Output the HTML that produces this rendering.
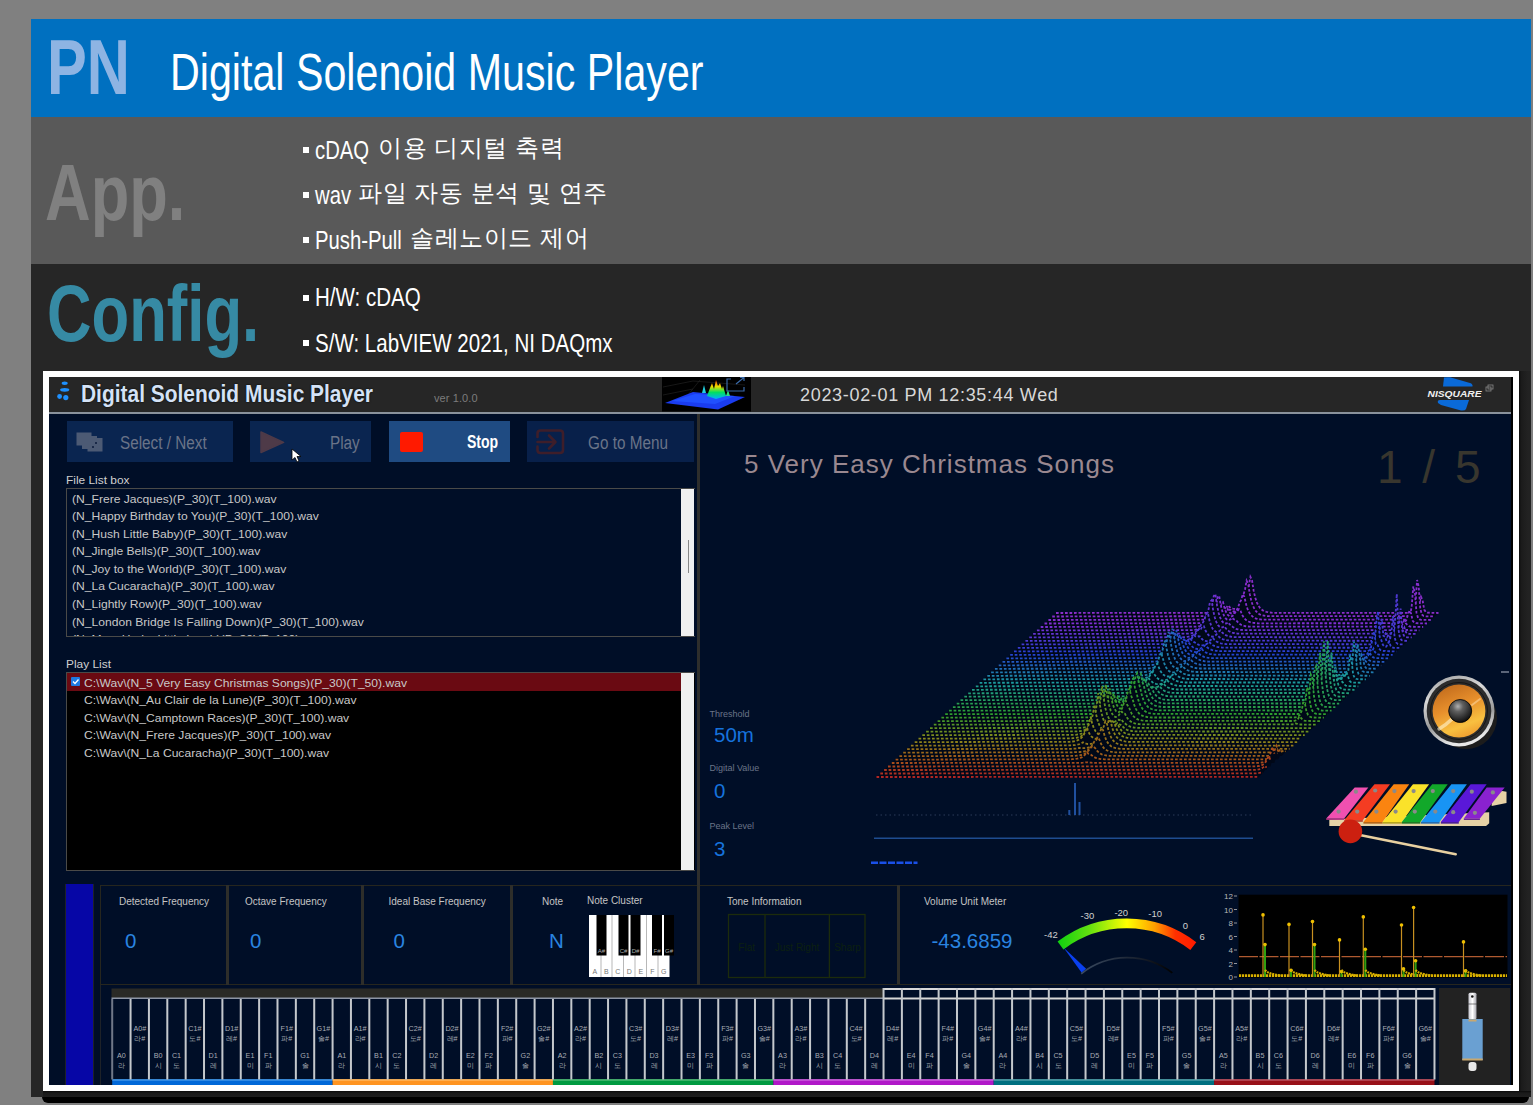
<!DOCTYPE html>
<html><head><meta charset="utf-8">
<style>
*{margin:0;padding:0;box-sizing:border-box}
html,body{width:1533px;height:1105px;overflow:hidden;background:#808080;font-family:"Liberation Sans",sans-serif;position:relative}
.a{position:absolute}
.n{display:inline-block;transform-origin:0 0;white-space:nowrap}
#hdr{left:31px;top:19px;width:1500px;height:98px;background:#0070c0}
#app{left:31px;top:117px;width:1500px;height:147px;background:#595959}
#cfg{left:31px;top:264px;width:1500px;height:833px;background:#262626}
#shadow{left:42px;top:1097px;width:1487px;height:6px;background:#000;border-radius:0 0 8px 8px}
#frame{left:43px;top:371px;width:1476px;height:720px;background:#fff}
#inner{left:49px;top:377px;width:1464px;height:708px;background:#000e27;overflow:hidden}
.big{font-weight:bold;font-size:75px;line-height:1}
.bul{color:#fff;font-size:26px;line-height:1}
.ko{font-size:24px;font-weight:300;letter-spacing:0.55px}
.lbl{color:#d0d0d0;font-size:10px;line-height:1;white-space:nowrap;transform:scaleX(1.19);transform-origin:0 0}
.li{color:#c8c8c8;font-size:11px;line-height:1;white-space:nowrap}
.lis{transform:scaleX(1.1)}
.lbl2{color:#c4c4c4;font-size:10px;line-height:1;white-space:nowrap}
.val{color:#2a84e0;font-size:20.5px;line-height:1;white-space:nowrap}
.lbl3{color:#6a7488;font-size:9px;line-height:1;white-space:nowrap}
.val2{color:#1672dc;font-size:20.5px;line-height:1;white-space:nowrap}
.sq{width:6px;height:6px;background:#fff}
</style></head><body>
<div id="hdr" class="a"></div>
<div id="app" class="a"></div>
<div id="cfg" class="a"></div>
<div id="shadow" class="a"></div>
<!-- header text -->
<div class="a big" style="left:47px;top:29px;font-size:77px;color:#8eb4e3"><span class="n" style="transform:scaleX(0.775)">PN</span></div>
<div class="a" style="left:170px;top:47px;color:#fff;font-size:51.5px;line-height:1"><span class="n" style="transform:scaleX(0.8)">Digital Solenoid Music Player</span></div>
<div class="a big" style="left:45px;top:153px;font-size:79px;color:#808080"><span class="n" style="transform:scaleX(0.8)">App.</span></div>
<div class="a big" style="left:47px;top:274px;font-size:79px;color:#368aa4"><span class="n" style="transform:scaleX(0.78)">Config.</span></div>
<!-- bullets -->
<div class="a sq" style="left:303px;top:147px"></div>
<div class="a bul" style="left:315px;top:136.6px"><span class="n" style="transform:scaleX(0.78)">cDAQ</span></div>
<div class="a bul ko" style="left:378px;top:136px"><span class="n">이용 디지털 축력</span></div>
<div class="a sq" style="left:303px;top:192px"></div>
<div class="a bul" style="left:315px;top:182px"><span class="n" style="transform:scaleX(0.78)">wav</span></div>
<div class="a bul ko" style="left:358px;top:181px"><span class="n">파일 자동 분석 및 연주</span></div>
<div class="a sq" style="left:303px;top:237px"></div>
<div class="a bul" style="left:315px;top:226.6px"><span class="n" style="transform:scaleX(0.78)">Push-Pull</span></div>
<div class="a bul ko" style="left:410px;top:226px"><span class="n">솔레노이드 제어</span></div>
<div class="a sq" style="left:303px;top:295px"></div>
<div class="a bul" style="left:315px;top:284.4px"><span class="n" style="transform:scaleX(0.79)">H/W: cDAQ</span></div>
<div class="a sq" style="left:303px;top:340px"></div>
<div class="a bul" style="left:315px;top:329.6px"><span class="n" style="transform:scaleX(0.79)">S/W: LabVIEW 2021, NI DAQmx</span></div>

<div class="a" style="left:1519px;top:371px;width:12px;height:726px;background:linear-gradient(90deg,#0a0a0a 0,#1a1a1a 2px,#1e1e1e 5px,#222 9px)"></div>
<div class="a" style="left:43px;top:1091px;width:1488px;height:6px;background:linear-gradient(180deg,#0a0a0a 0,#1a1a1a 2px,#1e1e1e 6px)"></div>
<div id="frame" class="a"></div>
<div id="inner" class="a">
</div>

<!-- app title bar -->
<div class="a" style="left:49px;top:377px;width:1462px;height:35px;background:#262626"></div>
<div class="a" style="left:1511px;top:377px;width:2px;height:708px;background:#000"></div>
<div class="a" style="left:49px;top:412px;width:1462px;height:2px;background:#8a929c"></div>
<svg class="a" style="left:55px;top:380px" width="18" height="24" viewBox="0 0 18 24">
<ellipse cx="9.7" cy="3.2" rx="3" ry="1.7" fill="#1e90ff"/>
<ellipse cx="9.7" cy="9.8" rx="4.6" ry="1.9" fill="#1e90ff"/>
<circle cx="4.6" cy="16.5" r="2.4" fill="#1e90ff"/><circle cx="10.8" cy="17.6" r="2.6" fill="#1e90ff"/>
</svg>
<div class="a" style="left:81px;top:383px;color:#d4e2f6;font-size:23px;line-height:1;font-weight:bold;text-shadow:0 0 2px #000"><span class="n" style="transform:scaleX(0.91)">Digital Solenoid Music Player</span></div>
<div class="a" style="left:434px;top:392.5px;color:#7c7c7c;font-size:11px;line-height:1;letter-spacing:0.1px"><span class="n">ver 1.0.0</span></div>
<div class="a" style="left:800px;top:385.5px;color:#d8d8d8;font-size:18px;line-height:1;letter-spacing:0.68px"><span class="n">2023-02-01 PM 12:35:44 Wed</span></div>
<!-- buttons -->
<div class="a" style="left:67px;top:421px;width:166px;height:41px;background:#0a2550"></div>
<div class="a" style="left:250px;top:421px;width:121px;height:41px;background:#0a2550"></div>
<div class="a" style="left:389px;top:421px;width:121px;height:41px;background:#1f4b82"></div>
<div class="a" style="left:527px;top:421px;width:167px;height:41px;background:#08204a"></div>
<div class="a" style="left:400px;top:432px;width:23px;height:20px;background:#ff1a00;border-radius:2px"></div>
<div class="a" style="left:467px;top:433px;color:#fff;font-size:18px;line-height:1;font-weight:bold"><span class="n" style="transform:scaleX(0.78)">Stop</span></div>
<div class="a" style="left:120px;top:433.5px;color:#6a7488;font-size:18px;line-height:1"><span class="n" style="transform:scaleX(0.85)">Select / Next</span></div>
<div class="a" style="left:330px;top:433.5px;color:#6a7488;font-size:18px;line-height:1"><span class="n" style="transform:scaleX(0.85)">Play</span></div>
<div class="a" style="left:588px;top:433.5px;color:#6a7488;font-size:18px;line-height:1"><span class="n" style="transform:scaleX(0.85)">Go to Menu</span></div>
<svg class="a" style="left:260px;top:430px" width="26" height="24"><polygon points="1,2 23.6,12.4 1,22.5" fill="#4e3a48" stroke="#4e3a48" stroke-width="1.5" stroke-linejoin="round"/></svg>
<svg class="a" style="left:530px;top:424px" width="40" height="36"><path d="M7.5 13 V9.5 Q7.5 6.5 10.5 6.5 H30 Q33 6.5 33 9.5 V26 Q33 29 30 29 H10.5 Q7.5 29 7.5 26 V22.5" fill="none" stroke="#3e1e2a" stroke-width="2.6" stroke-linecap="round"/><path d="M7.5 18 H24.5 M19 11.5 L25.5 18 L19 24.5" fill="none" stroke="#3e1e2a" stroke-width="2.6" stroke-linecap="round" stroke-linejoin="round"/></svg>
<svg class="a" style="left:70px;top:424px" width="40" height="36"><rect x="6.5" y="8.5" width="15" height="13" fill="#4c5a74"/><rect x="12" y="12" width="15" height="13" fill="#4c5a74"/><rect x="17.5" y="14" width="15" height="13.5" fill="#4c5a74"/><circle cx="26" cy="19" r="1" fill="#0a1a3a"/><circle cx="23" cy="23" r="1" fill="#0a1a3a"/></svg>
<svg class="a" style="left:291.3px;top:447.9px" width="12" height="16"><path d="M1 1 L1 12 L4 9.5 L6 14 L8 13 L6 8.5 L10 8.5 Z" fill="#fff" stroke="#000" stroke-width="0.8"/></svg>


<!-- file list -->
<div class="a lbl" style="left:66px;top:476px">File List box</div>
<div class="a" style="left:66px;top:488px;width:629px;height:149px;border:1px solid #4a4a48;border-right:none;overflow:hidden">
<div class="a li" style="left:5px;top:4.6px"><span class="n lis">(N_Frere Jacques)(P_30)(T_100).wav</span></div>
<div class="a li" style="left:5px;top:22.1px"><span class="n lis">(N_Happy Birthday to You)(P_30)(T_100).wav</span></div>
<div class="a li" style="left:5px;top:39.7px"><span class="n lis">(N_Hush Little Baby)(P_30)(T_100).wav</span></div>
<div class="a li" style="left:5px;top:57.3px"><span class="n lis">(N_Jingle Bells)(P_30)(T_100).wav</span></div>
<div class="a li" style="left:5px;top:74.8px"><span class="n lis">(N_Joy to the World)(P_30)(T_100).wav</span></div>
<div class="a li" style="left:5px;top:92.3px"><span class="n lis">(N_La Cucaracha)(P_30)(T_100).wav</span></div>
<div class="a li" style="left:5px;top:109.9px"><span class="n lis">(N_Lightly Row)(P_30)(T_100).wav</span></div>
<div class="a li" style="left:5px;top:127.5px"><span class="n lis">(N_London Bridge Is Falling Down)(P_30)(T_100).wav</span></div>
<div class="a li" style="left:5px;top:145.0px"><span class="n lis">(N_Mary Had a Little Lamb)(P_30)(T_100).wav</span></div>
</div>
<div class="a" style="left:681px;top:489px;width:13px;height:147px;background:#f0f0f0"></div>
<div class="a" style="left:688px;top:540px;width:1px;height:33px;background:#888"></div>
<!-- play list -->
<div class="a lbl" style="left:66px;top:660px">Play List</div>
<div class="a" style="left:66px;top:672px;width:629px;height:199px;border:1px solid #4a4a48;border-right:none;background:#000;overflow:hidden">
<div class="a" style="left:0;top:0;width:614px;height:18px;background:#6a0a12"></div>
<div class="a" style="left:4px;top:4px;width:9px;height:9px;background:#1e7ae0;border-radius:1px"></div>
<svg class="a" style="left:4px;top:4px" width="9" height="9"><path d="M2 4.5 L4 6.5 L7.5 2.5" stroke="#fff" stroke-width="1.3" fill="none"/></svg>
<div class="a li" style="left:17px;top:4.6px"><span class="n lis">C:\Wav\(N_5 Very Easy Christmas Songs)(P_30)(T_50).wav</span></div>
<div class="a li" style="left:17px;top:22.1px"><span class="n lis">C:\Wav\(N_Au Clair de la Lune)(P_30)(T_100).wav</span></div>
<div class="a li" style="left:17px;top:39.7px"><span class="n lis">C:\Wav\(N_Camptown Races)(P_30)(T_100).wav</span></div>
<div class="a li" style="left:17px;top:57.3px"><span class="n lis">C:\Wav\(N_Frere Jacques)(P_30)(T_100).wav</span></div>
<div class="a li" style="left:17px;top:74.8px"><span class="n lis">C:\Wav\(N_La Cucaracha)(P_30)(T_100).wav</span></div>
</div>
<div class="a" style="left:681px;top:673px;width:13px;height:197px;background:#f0f0f0"></div>
<div class="a" style="left:697px;top:414px;width:3px;height:471px;background:#2e2e2c"></div>

<!-- bottom-left info panels -->
<div class="a" style="left:65px;top:884px;width:1px;height:201px;background:#1e2228"></div>
<div class="a" style="left:66px;top:884px;width:27px;height:201px;background:#0606a6"></div>
<div class="a" style="left:93px;top:884px;width:1px;height:201px;background:#1e2228"></div>
<div class="a" style="left:100px;top:885px;width:597px;height:100px;border:1px solid #26261e;border-right:none"></div>
<div class="a" style="left:100px;top:985px;width:1px;height:100px;background:#1e2228"></div>
<div class="a" style="left:226px;top:885px;width:3px;height:100px;background:#2e2e2a"></div>
<div class="a" style="left:360.5px;top:885px;width:3px;height:100px;background:#2e2e2a"></div>
<div class="a" style="left:510px;top:885px;width:3px;height:100px;background:#2e2e2a"></div>
<div class="a" style="left:697px;top:885px;width:3px;height:100px;background:#2e2e2a"></div>
<div class="a lbl2" style="left:119px;top:897px">Detected Frequency</div>
<div class="a lbl2" style="left:245px;top:897px">Octave Frequency</div>
<div class="a lbl2" style="left:388.5px;top:897px">Ideal Base Frequency</div>
<div class="a lbl2" style="left:542px;top:897px">Note</div>
<div class="a lbl2" style="left:587px;top:896px">Note Cluster</div>
<div class="a val" style="left:125px;top:930.5px">0</div>
<div class="a val" style="left:250px;top:930.5px">0</div>
<div class="a val" style="left:393.5px;top:930.5px">0</div>
<div class="a val" style="left:549px;top:930.5px">N</div>
<!-- mini piano -->
<svg class="a" style="left:588.5px;top:915px" width="88" height="63" viewBox="0 0 88 63">
<rect x="0" y="0" width="80.5" height="62" fill="#fff"/>
<rect x="11.5" y="0" width="1" height="62" fill="#b8b8b8"/>
<rect x="22.5" y="0" width="1" height="62" fill="#b8b8b8"/>
<rect x="34.0" y="0" width="1" height="62" fill="#b8b8b8"/>
<rect x="45.5" y="0" width="1" height="62" fill="#b8b8b8"/>
<rect x="57.0" y="0" width="1" height="62" fill="#b8b8b8"/>
<rect x="68.5" y="0" width="1" height="62" fill="#b8b8b8"/>
<rect x="7.5" y="0" width="10" height="40.5" fill="#000"/>
<rect x="29.5" y="0" width="10" height="40.5" fill="#000"/>
<rect x="41.5" y="0" width="10" height="40.5" fill="#000"/>
<rect x="63.0" y="0" width="10" height="40.5" fill="#000"/>
<rect x="75.0" y="0" width="10" height="40.5" fill="#000"/>
<text x="5.8" y="58.5" font-size="7" fill="#777" text-anchor="middle" font-family="Liberation Sans">A</text>
<text x="17.3" y="58.5" font-size="7" fill="#777" text-anchor="middle" font-family="Liberation Sans">B</text>
<text x="28.8" y="58.5" font-size="7" fill="#777" text-anchor="middle" font-family="Liberation Sans">C</text>
<text x="40.3" y="58.5" font-size="7" fill="#777" text-anchor="middle" font-family="Liberation Sans">D</text>
<text x="51.8" y="58.5" font-size="7" fill="#777" text-anchor="middle" font-family="Liberation Sans">E</text>
<text x="63.3" y="58.5" font-size="7" fill="#777" text-anchor="middle" font-family="Liberation Sans">F</text>
<text x="74.8" y="58.5" font-size="7" fill="#777" text-anchor="middle" font-family="Liberation Sans">G</text>
<text x="12.5" y="38" font-size="6" fill="#aaa" text-anchor="middle" font-family="Liberation Sans">A#</text>
<text x="34.5" y="38" font-size="6" fill="#aaa" text-anchor="middle" font-family="Liberation Sans">C#</text>
<text x="46.5" y="38" font-size="6" fill="#aaa" text-anchor="middle" font-family="Liberation Sans">D#</text>
<text x="68.0" y="38" font-size="6" fill="#aaa" text-anchor="middle" font-family="Liberation Sans">F#</text>
<text x="80.0" y="38" font-size="6" fill="#aaa" text-anchor="middle" font-family="Liberation Sans">G#</text>
</svg>

<!-- keyboard -->
<svg class="a" style="left:100px;top:985px" width="1413" height="100" viewBox="100 985 1413 100">
<rect x="111.5" y="988.5" width="772.5" height="9.5" fill="#2a2a26"/>
<rect x="111.5" y="997.5" width="772.5" height="1.5" fill="#8c94a4"/>
<rect x="883" y="988" width="552" height="2" fill="#d8d8d8"/>
<rect x="883" y="997.5" width="552" height="2" fill="#d8d8d8"/>
<rect x="112.20" y="1079.3" width="220.38" height="5.7" fill="#0068d8"/><rect x="112.20" y="1079.3" width="220.38" height="1.3" fill="#50a0e8"/>
<rect x="332.58" y="1079.3" width="220.38" height="5.7" fill="#ff9420"/><rect x="332.58" y="1079.3" width="220.38" height="1.3" fill="#ffc070"/>
<rect x="552.96" y="1079.3" width="220.38" height="5.7" fill="#009a40"/><rect x="552.96" y="1079.3" width="220.38" height="1.3" fill="#60c080"/>
<rect x="773.34" y="1079.3" width="220.38" height="5.7" fill="#b018c8"/><rect x="773.34" y="1079.3" width="220.38" height="1.3" fill="#d070e0"/>
<rect x="993.72" y="1079.3" width="220.38" height="5.7" fill="#007080"/><rect x="993.72" y="1079.3" width="220.38" height="1.3" fill="#60a8b0"/>
<rect x="1214.10" y="1079.3" width="220.38" height="5.7" fill="#981018"/><rect x="1214.10" y="1079.3" width="220.38" height="1.3" fill="#c06070"/>
<rect x="111.20" y="999" width="2" height="80.5" fill="#707888"/>
<rect x="129.56" y="999" width="2" height="80.5" fill="#c4c8cc"/>
<rect x="147.93" y="999" width="2" height="80.5" fill="#c4c8cc"/>
<rect x="166.30" y="999" width="2" height="80.5" fill="#c4c8cc"/>
<rect x="184.66" y="999" width="2" height="80.5" fill="#c4c8cc"/>
<rect x="203.02" y="999" width="2" height="80.5" fill="#c4c8cc"/>
<rect x="221.39" y="999" width="2" height="80.5" fill="#c4c8cc"/>
<rect x="239.75" y="999" width="2" height="80.5" fill="#c4c8cc"/>
<rect x="258.12" y="999" width="2" height="80.5" fill="#c4c8cc"/>
<rect x="276.49" y="999" width="2" height="80.5" fill="#c4c8cc"/>
<rect x="294.85" y="999" width="2" height="80.5" fill="#c4c8cc"/>
<rect x="313.21" y="999" width="2" height="80.5" fill="#c4c8cc"/>
<rect x="331.58" y="999" width="2" height="80.5" fill="#c4c8cc"/>
<rect x="349.94" y="999" width="2" height="80.5" fill="#c4c8cc"/>
<rect x="368.31" y="999" width="2" height="80.5" fill="#c4c8cc"/>
<rect x="386.67" y="999" width="2" height="80.5" fill="#c4c8cc"/>
<rect x="405.04" y="999" width="2" height="80.5" fill="#c4c8cc"/>
<rect x="423.40" y="999" width="2" height="80.5" fill="#c4c8cc"/>
<rect x="441.77" y="999" width="2" height="80.5" fill="#c4c8cc"/>
<rect x="460.13" y="999" width="2" height="80.5" fill="#c4c8cc"/>
<rect x="478.50" y="999" width="2" height="80.5" fill="#c4c8cc"/>
<rect x="496.86" y="999" width="2" height="80.5" fill="#c4c8cc"/>
<rect x="515.23" y="999" width="2" height="80.5" fill="#c4c8cc"/>
<rect x="533.60" y="999" width="2" height="80.5" fill="#c4c8cc"/>
<rect x="551.96" y="999" width="2" height="80.5" fill="#c4c8cc"/>
<rect x="570.32" y="999" width="2" height="80.5" fill="#c4c8cc"/>
<rect x="588.69" y="999" width="2" height="80.5" fill="#c4c8cc"/>
<rect x="607.05" y="999" width="2" height="80.5" fill="#c4c8cc"/>
<rect x="625.42" y="999" width="2" height="80.5" fill="#c4c8cc"/>
<rect x="643.78" y="999" width="2" height="80.5" fill="#c4c8cc"/>
<rect x="662.15" y="999" width="2" height="80.5" fill="#c4c8cc"/>
<rect x="680.51" y="999" width="2" height="80.5" fill="#c4c8cc"/>
<rect x="698.88" y="999" width="2" height="80.5" fill="#c4c8cc"/>
<rect x="717.25" y="999" width="2" height="80.5" fill="#c4c8cc"/>
<rect x="735.61" y="999" width="2" height="80.5" fill="#c4c8cc"/>
<rect x="753.98" y="999" width="2" height="80.5" fill="#c4c8cc"/>
<rect x="772.34" y="999" width="2" height="80.5" fill="#c4c8cc"/>
<rect x="790.71" y="999" width="2" height="80.5" fill="#c4c8cc"/>
<rect x="809.07" y="999" width="2" height="80.5" fill="#c4c8cc"/>
<rect x="827.43" y="999" width="2" height="80.5" fill="#c4c8cc"/>
<rect x="845.80" y="999" width="2" height="80.5" fill="#c4c8cc"/>
<rect x="864.16" y="999" width="2" height="80.5" fill="#c4c8cc"/>
<rect x="882.53" y="988" width="2" height="91.5" fill="#c4c8cc"/>
<rect x="900.89" y="988" width="2" height="91.5" fill="#c4c8cc"/>
<rect x="919.26" y="988" width="2" height="91.5" fill="#c4c8cc"/>
<rect x="937.62" y="988" width="2" height="91.5" fill="#c4c8cc"/>
<rect x="955.99" y="988" width="2" height="91.5" fill="#c4c8cc"/>
<rect x="974.36" y="988" width="2" height="91.5" fill="#c4c8cc"/>
<rect x="992.72" y="988" width="2" height="91.5" fill="#c4c8cc"/>
<rect x="1011.08" y="988" width="2" height="91.5" fill="#c4c8cc"/>
<rect x="1029.45" y="988" width="2" height="91.5" fill="#c4c8cc"/>
<rect x="1047.81" y="988" width="2" height="91.5" fill="#c4c8cc"/>
<rect x="1066.18" y="988" width="2" height="91.5" fill="#c4c8cc"/>
<rect x="1084.54" y="988" width="2" height="91.5" fill="#c4c8cc"/>
<rect x="1102.91" y="988" width="2" height="91.5" fill="#c4c8cc"/>
<rect x="1121.27" y="988" width="2" height="91.5" fill="#c4c8cc"/>
<rect x="1139.64" y="988" width="2" height="91.5" fill="#c4c8cc"/>
<rect x="1158.00" y="988" width="2" height="91.5" fill="#c4c8cc"/>
<rect x="1176.37" y="988" width="2" height="91.5" fill="#c4c8cc"/>
<rect x="1194.73" y="988" width="2" height="91.5" fill="#c4c8cc"/>
<rect x="1213.10" y="988" width="2" height="91.5" fill="#c4c8cc"/>
<rect x="1231.46" y="988" width="2" height="91.5" fill="#c4c8cc"/>
<rect x="1249.83" y="988" width="2" height="91.5" fill="#c4c8cc"/>
<rect x="1268.19" y="988" width="2" height="91.5" fill="#c4c8cc"/>
<rect x="1286.56" y="988" width="2" height="91.5" fill="#c4c8cc"/>
<rect x="1304.92" y="988" width="2" height="91.5" fill="#c4c8cc"/>
<rect x="1323.29" y="988" width="2" height="91.5" fill="#c4c8cc"/>
<rect x="1341.65" y="988" width="2" height="91.5" fill="#c4c8cc"/>
<rect x="1360.02" y="988" width="2" height="91.5" fill="#c4c8cc"/>
<rect x="1378.38" y="988" width="2" height="91.5" fill="#c4c8cc"/>
<rect x="1396.75" y="988" width="2" height="91.5" fill="#c4c8cc"/>
<rect x="1415.12" y="988" width="2" height="91.5" fill="#c4c8cc"/>
<rect x="1433.48" y="988" width="2" height="91.5" fill="#c4c8cc"/>
<g font-family="Liberation Sans" font-size="7.2" fill="#a8acb4" text-anchor="middle">
<text x="121.4" y="1058">A0</text><text x="121.4" y="1067.5">라</text>
<text x="139.8" y="1030.5">A0#</text><text x="139.8" y="1040.5">라#</text>
<text x="158.1" y="1058">B0</text><text x="158.1" y="1067.5">시</text>
<text x="176.5" y="1058">C1</text><text x="176.5" y="1067.5">도</text>
<text x="194.9" y="1030.5">C1#</text><text x="194.9" y="1040.5">도#</text>
<text x="213.2" y="1058">D1</text><text x="213.2" y="1067.5">레</text>
<text x="231.6" y="1030.5">D1#</text><text x="231.6" y="1040.5">레#</text>
<text x="250.0" y="1058">E1</text><text x="250.0" y="1067.5">미</text>
<text x="268.3" y="1058">F1</text><text x="268.3" y="1067.5">파</text>
<text x="286.7" y="1030.5">F1#</text><text x="286.7" y="1040.5">파#</text>
<text x="305.0" y="1058">G1</text><text x="305.0" y="1067.5">솔</text>
<text x="323.4" y="1030.5">G1#</text><text x="323.4" y="1040.5">솔#</text>
<text x="341.8" y="1058">A1</text><text x="341.8" y="1067.5">라</text>
<text x="360.1" y="1030.5">A1#</text><text x="360.1" y="1040.5">라#</text>
<text x="378.5" y="1058">B1</text><text x="378.5" y="1067.5">시</text>
<text x="396.9" y="1058">C2</text><text x="396.9" y="1067.5">도</text>
<text x="415.2" y="1030.5">C2#</text><text x="415.2" y="1040.5">도#</text>
<text x="433.6" y="1058">D2</text><text x="433.6" y="1067.5">레</text>
<text x="452.0" y="1030.5">D2#</text><text x="452.0" y="1040.5">레#</text>
<text x="470.3" y="1058">E2</text><text x="470.3" y="1067.5">미</text>
<text x="488.7" y="1058">F2</text><text x="488.7" y="1067.5">파</text>
<text x="507.1" y="1030.5">F2#</text><text x="507.1" y="1040.5">파#</text>
<text x="525.4" y="1058">G2</text><text x="525.4" y="1067.5">솔</text>
<text x="543.8" y="1030.5">G2#</text><text x="543.8" y="1040.5">솔#</text>
<text x="562.2" y="1058">A2</text><text x="562.2" y="1067.5">라</text>
<text x="580.5" y="1030.5">A2#</text><text x="580.5" y="1040.5">라#</text>
<text x="598.9" y="1058">B2</text><text x="598.9" y="1067.5">시</text>
<text x="617.3" y="1058">C3</text><text x="617.3" y="1067.5">도</text>
<text x="635.6" y="1030.5">C3#</text><text x="635.6" y="1040.5">도#</text>
<text x="654.0" y="1058">D3</text><text x="654.0" y="1067.5">레</text>
<text x="672.4" y="1030.5">D3#</text><text x="672.4" y="1040.5">레#</text>
<text x="690.7" y="1058">E3</text><text x="690.7" y="1067.5">미</text>
<text x="709.1" y="1058">F3</text><text x="709.1" y="1067.5">파</text>
<text x="727.4" y="1030.5">F3#</text><text x="727.4" y="1040.5">파#</text>
<text x="745.8" y="1058">G3</text><text x="745.8" y="1067.5">솔</text>
<text x="764.2" y="1030.5">G3#</text><text x="764.2" y="1040.5">솔#</text>
<text x="782.5" y="1058">A3</text><text x="782.5" y="1067.5">라</text>
<text x="800.9" y="1030.5">A3#</text><text x="800.9" y="1040.5">라#</text>
<text x="819.3" y="1058">B3</text><text x="819.3" y="1067.5">시</text>
<text x="837.6" y="1058">C4</text><text x="837.6" y="1067.5">도</text>
<text x="856.0" y="1030.5">C4#</text><text x="856.0" y="1040.5">도#</text>
<text x="874.4" y="1058">D4</text><text x="874.4" y="1067.5">레</text>
<text x="892.7" y="1030.5">D4#</text><text x="892.7" y="1040.5">레#</text>
<text x="911.1" y="1058">E4</text><text x="911.1" y="1067.5">미</text>
<text x="929.5" y="1058">F4</text><text x="929.5" y="1067.5">파</text>
<text x="947.8" y="1030.5">F4#</text><text x="947.8" y="1040.5">파#</text>
<text x="966.2" y="1058">G4</text><text x="966.2" y="1067.5">솔</text>
<text x="984.6" y="1030.5">G4#</text><text x="984.6" y="1040.5">솔#</text>
<text x="1002.9" y="1058">A4</text><text x="1002.9" y="1067.5">라</text>
<text x="1021.3" y="1030.5">A4#</text><text x="1021.3" y="1040.5">라#</text>
<text x="1039.6" y="1058">B4</text><text x="1039.6" y="1067.5">시</text>
<text x="1058.0" y="1058">C5</text><text x="1058.0" y="1067.5">도</text>
<text x="1076.4" y="1030.5">C5#</text><text x="1076.4" y="1040.5">도#</text>
<text x="1094.7" y="1058">D5</text><text x="1094.7" y="1067.5">레</text>
<text x="1113.1" y="1030.5">D5#</text><text x="1113.1" y="1040.5">레#</text>
<text x="1131.5" y="1058">E5</text><text x="1131.5" y="1067.5">미</text>
<text x="1149.8" y="1058">F5</text><text x="1149.8" y="1067.5">파</text>
<text x="1168.2" y="1030.5">F5#</text><text x="1168.2" y="1040.5">파#</text>
<text x="1186.6" y="1058">G5</text><text x="1186.6" y="1067.5">솔</text>
<text x="1204.9" y="1030.5">G5#</text><text x="1204.9" y="1040.5">솔#</text>
<text x="1223.3" y="1058">A5</text><text x="1223.3" y="1067.5">라</text>
<text x="1241.7" y="1030.5">A5#</text><text x="1241.7" y="1040.5">라#</text>
<text x="1260.0" y="1058">B5</text><text x="1260.0" y="1067.5">시</text>
<text x="1278.4" y="1058">C6</text><text x="1278.4" y="1067.5">도</text>
<text x="1296.8" y="1030.5">C6#</text><text x="1296.8" y="1040.5">도#</text>
<text x="1315.1" y="1058">D6</text><text x="1315.1" y="1067.5">레</text>
<text x="1333.5" y="1030.5">D6#</text><text x="1333.5" y="1040.5">레#</text>
<text x="1351.9" y="1058">E6</text><text x="1351.9" y="1067.5">미</text>
<text x="1370.2" y="1058">F6</text><text x="1370.2" y="1067.5">파</text>
<text x="1388.6" y="1030.5">F6#</text><text x="1388.6" y="1040.5">파#</text>
<text x="1407.0" y="1058">G6</text><text x="1407.0" y="1067.5">솔</text>
<text x="1425.3" y="1030.5">G6#</text><text x="1425.3" y="1040.5">솔#</text>
</g>
</svg>

<!-- right panel -->
<div class="a" style="left:744px;top:451px;color:#9a8890;font-size:26px;line-height:1;white-space:nowrap;letter-spacing:1px">5 Very Easy Christmas Songs</div>
<div class="a" style="left:1377px;top:444px;color:#38362e;font-size:46px;line-height:1;white-space:nowrap;letter-spacing:3.5px">1 / 5</div>
<div class="a lbl3" style="left:709.5px;top:710.2px">Threshold</div>
<div class="a val2" style="left:714px;top:724.8px">50m</div>
<div class="a lbl3" style="left:709.5px;top:764.2px">Digital Value</div>
<div class="a val2" style="left:714px;top:781px">0</div>
<div class="a lbl3" style="left:709.5px;top:822.2px">Peak Level</div>
<div class="a val2" style="left:714px;top:839.3px">3</div>
<!--PLOT--><svg class="a" style="left:860px;top:540px" width="600" height="340" viewBox="860 540 600 340">
<polygon fill="#000818" points="1056.0,613.0 1212.2,612.8 1213.8,612.7 1215.4,612.5 1217.0,612.3 1218.6,612.1 1220.2,611.7 1221.8,611.1 1223.3,610.3 1224.9,609.2 1226.5,607.6 1228.1,605.4 1229.7,607.2 1231.3,608.2 1232.9,608.6 1234.5,608.9 1236.1,609.3 1237.7,609.2 1239.3,608.6 1240.9,607.4 1242.5,605.4 1244.1,602.4 1245.7,597.9 1247.2,591.4 1248.8,586.0 1250.4,576.9 1252.0,580.2 1253.6,590.5 1255.2,597.6 1256.8,602.4 1258.4,605.7 1260.0,608.0 1261.6,609.6 1263.2,610.6 1264.8,611.4 1266.4,611.9 1268.0,612.2 1269.6,612.5 1271.2,612.6 1272.8,612.8 1413.0,612.8 1414.6,612.5 1416.2,611.7 1417.8,609.5 1419.4,603.6 1421.0,596.8 1422.6,600.4 1424.2,609.6 1425.8,612.1 1427.3,612.7 1438.5,613.0 1434.7,616.5 1052.2,616.5"/>
<polyline fill="none" stroke="#8a2eca" stroke-width="1.8" stroke-dasharray="2.7 1.8" points="1056.0,613.0 1212.2,612.8 1213.8,612.7 1215.4,612.5 1217.0,612.3 1218.6,612.1 1220.2,611.7 1221.8,611.1 1223.3,610.3 1224.9,609.2 1226.5,607.6 1228.1,605.4 1229.7,607.2 1231.3,608.2 1232.9,608.6 1234.5,608.9 1236.1,609.3 1237.7,609.2 1239.3,608.6 1240.9,607.4 1242.5,605.4 1244.1,602.4 1245.7,597.9 1247.2,591.4 1248.8,586.0 1250.4,576.9 1252.0,580.2 1253.6,590.5 1255.2,597.6 1256.8,602.4 1258.4,605.7 1260.0,608.0 1261.6,609.6 1263.2,610.6 1264.8,611.4 1266.4,611.9 1268.0,612.2 1269.6,612.5 1271.2,612.6 1272.8,612.8 1413.0,612.8 1414.6,612.5 1416.2,611.7 1417.8,609.5 1419.4,603.6 1421.0,596.8 1422.6,600.4 1424.2,609.6 1425.8,612.1 1427.3,612.7 1438.5,613.0"/>
<polygon fill="#000818" points="1052.2,616.5 1208.4,616.2 1210.0,616.1 1211.6,616.0 1213.1,615.8 1214.7,615.5 1216.3,615.0 1217.9,614.4 1219.5,613.6 1221.1,612.3 1222.7,610.6 1224.3,608.1 1225.9,609.5 1227.5,610.0 1229.1,609.7 1230.7,609.8 1232.3,611.0 1233.9,611.5 1235.5,611.3 1237.1,610.3 1238.6,608.6 1240.2,605.7 1241.8,601.3 1243.4,594.9 1245.0,589.7 1246.6,580.7 1248.2,584.0 1249.8,594.2 1251.4,601.2 1253.0,606.0 1254.6,609.3 1256.2,611.5 1257.8,613.1 1259.4,614.2 1261.0,614.9 1262.6,615.4 1264.1,615.7 1265.7,616.0 1267.3,616.1 1268.9,616.2 1409.2,616.2 1410.8,615.9 1412.4,614.8 1414.0,611.8 1415.6,602.0 1417.1,580.0 1418.7,586.6 1420.3,608.8 1421.9,614.5 1423.5,616.0 1425.1,616.3 1434.7,616.5 1430.9,620.0 1048.4,620.0"/>
<polyline fill="none" stroke="#872ecd" stroke-width="1.8" stroke-dasharray="2.7 1.8" points="1052.2,616.5 1208.4,616.2 1210.0,616.1 1211.6,616.0 1213.1,615.8 1214.7,615.5 1216.3,615.0 1217.9,614.4 1219.5,613.6 1221.1,612.3 1222.7,610.6 1224.3,608.1 1225.9,609.5 1227.5,610.0 1229.1,609.7 1230.7,609.8 1232.3,611.0 1233.9,611.5 1235.5,611.3 1237.1,610.3 1238.6,608.6 1240.2,605.7 1241.8,601.3 1243.4,594.9 1245.0,589.7 1246.6,580.7 1248.2,584.0 1249.8,594.2 1251.4,601.2 1253.0,606.0 1254.6,609.3 1256.2,611.5 1257.8,613.1 1259.4,614.2 1261.0,614.9 1262.6,615.4 1264.1,615.7 1265.7,616.0 1267.3,616.1 1268.9,616.2 1409.2,616.2 1410.8,615.9 1412.4,614.8 1414.0,611.8 1415.6,602.0 1417.1,580.0 1418.7,586.6 1420.3,608.8 1421.9,614.5 1423.5,616.0 1425.1,616.3 1434.7,616.5"/>
<polygon fill="#000818" points="1048.4,620.0 1204.5,619.7 1206.1,619.6 1207.7,619.4 1209.3,619.1 1210.9,618.8 1212.5,618.3 1214.1,617.6 1215.7,616.5 1217.3,615.0 1218.9,612.9 1220.5,609.9 1222.1,610.5 1223.7,609.9 1225.3,607.9 1226.9,607.6 1228.5,610.8 1230.0,612.7 1231.6,613.6 1233.2,613.6 1234.8,612.7 1236.4,610.8 1238.0,607.7 1239.6,602.9 1241.2,599.9 1242.8,594.2 1244.4,596.8 1246.0,604.1 1247.6,609.1 1249.2,612.5 1250.8,614.8 1252.4,616.4 1254.0,617.5 1255.5,618.3 1257.1,618.8 1258.7,619.2 1260.3,619.4 1261.9,619.6 1263.5,619.7 1405.4,619.7 1407.0,619.4 1408.5,618.4 1410.1,615.4 1411.7,606.3 1413.3,586.4 1414.9,592.6 1416.5,612.9 1418.1,618.1 1419.7,619.5 1421.3,619.8 1430.9,620.0 1427.0,623.5 1044.5,623.5"/>
<polyline fill="none" stroke="#842ecf" stroke-width="1.8" stroke-dasharray="2.7 1.8" points="1048.4,620.0 1204.5,619.7 1206.1,619.6 1207.7,619.4 1209.3,619.1 1210.9,618.8 1212.5,618.3 1214.1,617.6 1215.7,616.5 1217.3,615.0 1218.9,612.9 1220.5,609.9 1222.1,610.5 1223.7,609.9 1225.3,607.9 1226.9,607.6 1228.5,610.8 1230.0,612.7 1231.6,613.6 1233.2,613.6 1234.8,612.7 1236.4,610.8 1238.0,607.7 1239.6,602.9 1241.2,599.9 1242.8,594.2 1244.4,596.8 1246.0,604.1 1247.6,609.1 1249.2,612.5 1250.8,614.8 1252.4,616.4 1254.0,617.5 1255.5,618.3 1257.1,618.8 1258.7,619.2 1260.3,619.4 1261.9,619.6 1263.5,619.7 1405.4,619.7 1407.0,619.4 1408.5,618.4 1410.1,615.4 1411.7,606.3 1413.3,586.4 1414.9,592.6 1416.5,612.9 1418.1,618.1 1419.7,619.5 1421.3,619.8 1430.9,620.0"/>
<polygon fill="#000818" points="1044.5,623.5 1199.1,623.2 1200.7,623.1 1202.3,623.0 1203.9,622.8 1205.5,622.4 1207.1,622.0 1208.7,621.4 1210.3,620.4 1211.9,619.1 1213.5,617.2 1215.1,614.5 1216.7,610.7 1218.3,610.0 1219.9,607.6 1221.4,602.9 1223.0,602.1 1224.6,608.3 1226.2,612.4 1227.8,614.9 1229.4,616.2 1231.0,616.6 1232.6,615.9 1234.2,614.3 1235.8,611.4 1237.4,611.1 1239.0,609.2 1240.6,611.0 1242.2,614.9 1243.8,617.6 1245.4,619.4 1246.9,620.7 1248.5,621.5 1250.1,622.1 1251.7,622.6 1253.3,622.8 1254.9,623.0 1256.5,623.2 1258.1,623.3 1401.5,623.2 1403.1,622.9 1404.7,622.2 1406.3,620.2 1407.9,614.9 1409.5,610.5 1411.1,613.6 1412.7,620.8 1414.3,622.7 1415.9,623.2 1427.0,623.5 1423.2,627.0 1040.7,627.0"/>
<polyline fill="none" stroke="#812ed2" stroke-width="1.8" stroke-dasharray="2.7 1.8" points="1044.5,623.5 1199.1,623.2 1200.7,623.1 1202.3,623.0 1203.9,622.8 1205.5,622.4 1207.1,622.0 1208.7,621.4 1210.3,620.4 1211.9,619.1 1213.5,617.2 1215.1,614.5 1216.7,610.7 1218.3,610.0 1219.9,607.6 1221.4,602.9 1223.0,602.1 1224.6,608.3 1226.2,612.4 1227.8,614.9 1229.4,616.2 1231.0,616.6 1232.6,615.9 1234.2,614.3 1235.8,611.4 1237.4,611.1 1239.0,609.2 1240.6,611.0 1242.2,614.9 1243.8,617.6 1245.4,619.4 1246.9,620.7 1248.5,621.5 1250.1,622.1 1251.7,622.6 1253.3,622.8 1254.9,623.0 1256.5,623.2 1258.1,623.3 1401.5,623.2 1403.1,622.9 1404.7,622.2 1406.3,620.2 1407.9,614.9 1409.5,610.5 1411.1,613.6 1412.7,620.8 1414.3,622.7 1415.9,623.2 1427.0,623.5"/>
<polygon fill="#000818" points="1040.7,627.0 1195.3,626.7 1196.9,626.5 1198.5,626.4 1200.1,626.1 1201.7,625.7 1203.3,625.2 1204.9,624.4 1206.5,623.3 1208.1,621.7 1209.7,619.4 1211.3,616.0 1212.8,611.2 1214.4,609.3 1216.0,604.9 1217.6,597.3 1219.2,595.8 1220.8,605.3 1222.4,611.6 1224.0,615.7 1225.6,618.3 1227.2,619.6 1228.8,620.0 1230.4,619.4 1232.0,617.8 1233.6,619.2 1235.2,619.7 1236.8,621.0 1238.3,622.8 1239.9,624.1 1241.5,625.0 1243.1,625.6 1244.7,626.0 1246.3,626.3 1247.9,626.5 1249.5,626.6 1251.1,626.7 1397.7,626.7 1399.3,626.5 1400.9,625.8 1402.5,624.3 1404.1,620.6 1405.7,623.1 1407.3,624.8 1408.9,626.2 1410.5,626.7 1423.2,627.0 1419.4,630.5 1036.9,630.5"/>
<polyline fill="none" stroke="#792fd3" stroke-width="1.8" stroke-dasharray="2.7 1.8" points="1040.7,627.0 1195.3,626.7 1196.9,626.5 1198.5,626.4 1200.1,626.1 1201.7,625.7 1203.3,625.2 1204.9,624.4 1206.5,623.3 1208.1,621.7 1209.7,619.4 1211.3,616.0 1212.8,611.2 1214.4,609.3 1216.0,604.9 1217.6,597.3 1219.2,595.8 1220.8,605.3 1222.4,611.6 1224.0,615.7 1225.6,618.3 1227.2,619.6 1228.8,620.0 1230.4,619.4 1232.0,617.8 1233.6,619.2 1235.2,619.7 1236.8,621.0 1238.3,622.8 1239.9,624.1 1241.5,625.0 1243.1,625.6 1244.7,626.0 1246.3,626.3 1247.9,626.5 1249.5,626.6 1251.1,626.7 1397.7,626.7 1399.3,626.5 1400.9,625.8 1402.5,624.3 1404.1,620.6 1405.7,623.1 1407.3,624.8 1408.9,626.2 1410.5,626.7 1423.2,627.0"/>
<polygon fill="#000818" points="1036.9,630.4 1189.9,630.2 1191.5,630.1 1193.1,630.0 1194.7,629.8 1196.3,629.5 1197.9,629.1 1199.5,628.5 1201.1,627.7 1202.7,626.4 1204.2,624.7 1205.8,622.1 1207.4,618.5 1209.0,613.2 1210.6,610.5 1212.2,605.0 1213.8,595.9 1215.4,594.1 1217.0,605.2 1218.6,612.7 1220.2,617.7 1221.8,620.9 1223.4,622.7 1225.0,623.5 1226.6,623.4 1228.2,622.3 1229.7,624.4 1231.3,625.8 1232.9,627.0 1234.5,628.0 1236.1,628.8 1237.7,629.3 1239.3,629.6 1240.9,629.9 1242.5,630.0 1244.1,630.2 1393.9,630.2 1395.5,630.0 1397.1,629.3 1398.7,627.8 1400.3,624.4 1401.9,627.8 1403.5,629.3 1405.1,629.9 1406.7,630.0 1408.2,629.8 1409.8,630.3 1419.4,630.4 1415.6,633.9 1033.1,633.9"/>
<polyline fill="none" stroke="#6e32d3" stroke-width="1.8" stroke-dasharray="2.7 1.8" points="1036.9,630.4 1189.9,630.2 1191.5,630.1 1193.1,630.0 1194.7,629.8 1196.3,629.5 1197.9,629.1 1199.5,628.5 1201.1,627.7 1202.7,626.4 1204.2,624.7 1205.8,622.1 1207.4,618.5 1209.0,613.2 1210.6,610.5 1212.2,605.0 1213.8,595.9 1215.4,594.1 1217.0,605.2 1218.6,612.7 1220.2,617.7 1221.8,620.9 1223.4,622.7 1225.0,623.5 1226.6,623.4 1228.2,622.3 1229.7,624.4 1231.3,625.8 1232.9,627.0 1234.5,628.0 1236.1,628.8 1237.7,629.3 1239.3,629.6 1240.9,629.9 1242.5,630.0 1244.1,630.2 1393.9,630.2 1395.5,630.0 1397.1,629.3 1398.7,627.8 1400.3,624.4 1401.9,627.8 1403.5,629.3 1405.1,629.9 1406.7,630.0 1408.2,629.8 1409.8,630.3 1419.4,630.4"/>
<polygon fill="#000818" points="1033.1,633.9 1186.1,633.7 1187.7,633.6 1189.3,633.5 1190.9,633.3 1192.5,633.0 1194.1,632.6 1195.6,632.1 1197.2,631.3 1198.8,630.1 1200.4,628.4 1202.0,626.0 1203.6,622.5 1205.2,617.5 1206.8,615.1 1208.4,610.2 1210.0,602.0 1211.6,600.3 1213.2,610.6 1214.8,617.5 1216.4,622.1 1218.0,625.1 1219.6,626.7 1221.1,627.4 1222.7,627.3 1224.3,626.2 1225.9,628.5 1227.5,630.0 1229.1,631.2 1230.7,632.0 1232.3,632.6 1233.9,633.0 1235.5,633.3 1237.1,633.5 1238.7,633.6 1240.3,633.7 1390.1,633.7 1391.7,633.4 1393.3,632.8 1394.9,631.3 1396.5,627.9 1398.1,631.3 1399.6,632.6 1401.2,632.7 1402.8,630.9 1404.4,627.4 1406.0,632.3 1407.6,633.5 1409.2,633.8 1415.6,633.9 1411.8,637.4 1029.3,637.4"/>
<polyline fill="none" stroke="#6334d3" stroke-width="1.8" stroke-dasharray="2.7 1.8" points="1033.1,633.9 1186.1,633.7 1187.7,633.6 1189.3,633.5 1190.9,633.3 1192.5,633.0 1194.1,632.6 1195.6,632.1 1197.2,631.3 1198.8,630.1 1200.4,628.4 1202.0,626.0 1203.6,622.5 1205.2,617.5 1206.8,615.1 1208.4,610.2 1210.0,602.0 1211.6,600.3 1213.2,610.6 1214.8,617.5 1216.4,622.1 1218.0,625.1 1219.6,626.7 1221.1,627.4 1222.7,627.3 1224.3,626.2 1225.9,628.5 1227.5,630.0 1229.1,631.2 1230.7,632.0 1232.3,632.6 1233.9,633.0 1235.5,633.3 1237.1,633.5 1238.7,633.6 1240.3,633.7 1390.1,633.7 1391.7,633.4 1393.3,632.8 1394.9,631.3 1396.5,627.9 1398.1,631.3 1399.6,632.6 1401.2,632.7 1402.8,630.9 1404.4,627.4 1406.0,632.3 1407.6,633.5 1409.2,633.8 1415.6,633.9"/>
<polygon fill="#000818" points="1029.3,637.4 1183.9,637.2 1185.5,637.1 1187.0,636.9 1188.6,636.7 1190.2,636.3 1191.8,635.8 1193.4,635.2 1195.0,634.2 1196.6,632.8 1198.2,630.7 1199.8,627.8 1201.4,623.6 1203.0,622.5 1204.6,619.4 1206.2,613.8 1207.8,612.7 1209.4,620.2 1211.0,625.2 1212.5,628.5 1214.1,630.5 1215.7,631.6 1217.3,631.9 1218.9,631.4 1220.5,630.2 1222.1,632.4 1223.7,633.8 1225.3,634.9 1226.9,635.7 1228.5,636.2 1230.1,636.5 1231.7,636.8 1233.3,637.0 1234.9,637.1 1236.5,637.2 1384.7,637.3 1386.3,637.1 1387.9,636.5 1389.5,635.7 1391.0,634.7 1392.6,631.3 1394.2,634.6 1395.8,635.5 1397.4,633.8 1399.0,624.7 1400.6,608.6 1402.2,630.2 1403.8,635.6 1405.4,637.0 1407.0,637.3 1411.8,637.4 1407.9,640.9 1025.4,640.9"/>
<polyline fill="none" stroke="#5836d3" stroke-width="1.8" stroke-dasharray="2.7 1.8" points="1029.3,637.4 1183.9,637.2 1185.5,637.1 1187.0,636.9 1188.6,636.7 1190.2,636.3 1191.8,635.8 1193.4,635.2 1195.0,634.2 1196.6,632.8 1198.2,630.7 1199.8,627.8 1201.4,623.6 1203.0,622.5 1204.6,619.4 1206.2,613.8 1207.8,612.7 1209.4,620.2 1211.0,625.2 1212.5,628.5 1214.1,630.5 1215.7,631.6 1217.3,631.9 1218.9,631.4 1220.5,630.2 1222.1,632.4 1223.7,633.8 1225.3,634.9 1226.9,635.7 1228.5,636.2 1230.1,636.5 1231.7,636.8 1233.3,637.0 1234.9,637.1 1236.5,637.2 1384.7,637.3 1386.3,637.1 1387.9,636.5 1389.5,635.7 1391.0,634.7 1392.6,631.3 1394.2,634.6 1395.8,635.5 1397.4,633.8 1399.0,624.7 1400.6,608.6 1402.2,630.2 1403.8,635.6 1405.4,637.0 1407.0,637.3 1411.8,637.4"/>
<polygon fill="#000818" points="1025.4,640.9 1180.0,640.7 1181.6,640.6 1183.2,640.5 1184.8,640.3 1186.4,640.0 1188.0,639.6 1189.6,639.1 1191.2,638.3 1192.8,637.2 1194.4,635.6 1196.0,633.3 1197.6,630.0 1199.2,630.2 1200.8,629.1 1202.4,626.4 1203.9,626.2 1205.5,630.5 1207.1,633.4 1208.7,635.2 1210.3,636.2 1211.9,636.6 1213.5,636.4 1215.1,635.6 1216.7,634.2 1218.3,636.2 1219.9,637.6 1221.5,638.6 1223.1,639.3 1224.7,639.7 1226.3,640.1 1227.9,640.3 1229.4,640.5 1231.0,640.6 1379.3,640.8 1380.9,640.5 1382.4,639.5 1384.0,635.8 1385.6,633.6 1387.2,636.8 1388.8,634.5 1390.4,637.9 1392.0,638.5 1393.6,635.3 1395.2,620.3 1396.8,593.9 1398.4,629.2 1400.0,638.0 1401.6,640.2 1403.2,640.7 1407.9,640.9 1404.1,644.4 1021.6,644.4"/>
<polyline fill="none" stroke="#4d39d3" stroke-width="1.8" stroke-dasharray="2.7 1.8" points="1025.4,640.9 1180.0,640.7 1181.6,640.6 1183.2,640.5 1184.8,640.3 1186.4,640.0 1188.0,639.6 1189.6,639.1 1191.2,638.3 1192.8,637.2 1194.4,635.6 1196.0,633.3 1197.6,630.0 1199.2,630.2 1200.8,629.1 1202.4,626.4 1203.9,626.2 1205.5,630.5 1207.1,633.4 1208.7,635.2 1210.3,636.2 1211.9,636.6 1213.5,636.4 1215.1,635.6 1216.7,634.2 1218.3,636.2 1219.9,637.6 1221.5,638.6 1223.1,639.3 1224.7,639.7 1226.3,640.1 1227.9,640.3 1229.4,640.5 1231.0,640.6 1379.3,640.8 1380.9,640.5 1382.4,639.5 1384.0,635.8 1385.6,633.6 1387.2,636.8 1388.8,634.5 1390.4,637.9 1392.0,638.5 1393.6,635.3 1395.2,620.3 1396.8,593.9 1398.4,629.2 1400.0,638.0 1401.6,640.2 1403.2,640.7 1407.9,640.9"/>
<polygon fill="#000818" points="1021.6,644.4 1177.8,644.1 1179.4,644.0 1181.0,643.9 1182.6,643.6 1184.2,643.3 1185.8,642.8 1187.4,642.2 1189.0,641.2 1190.6,639.9 1192.2,638.0 1193.8,635.3 1195.3,636.3 1196.9,636.8 1198.5,636.3 1200.1,636.6 1201.7,638.8 1203.3,640.1 1204.9,640.9 1206.5,641.2 1208.1,641.1 1209.7,640.6 1211.3,639.6 1212.9,638.0 1214.5,639.9 1216.1,641.2 1217.7,642.2 1219.3,642.8 1220.8,643.3 1222.4,643.6 1224.0,643.8 1225.6,644.0 1227.2,644.1 1373.8,644.3 1375.4,644.1 1377.0,643.2 1378.6,639.6 1380.2,625.5 1381.8,619.0 1383.4,635.7 1385.0,636.8 1386.6,641.2 1388.2,642.4 1389.8,640.8 1391.4,632.0 1393.0,616.2 1394.6,637.4 1396.2,642.6 1397.8,644.0 1399.3,644.3 1404.1,644.4 1400.3,647.9 1017.8,647.9"/>
<polyline fill="none" stroke="#423bd3" stroke-width="1.8" stroke-dasharray="2.7 1.8" points="1021.6,644.4 1177.8,644.1 1179.4,644.0 1181.0,643.9 1182.6,643.6 1184.2,643.3 1185.8,642.8 1187.4,642.2 1189.0,641.2 1190.6,639.9 1192.2,638.0 1193.8,635.3 1195.3,636.3 1196.9,636.8 1198.5,636.3 1200.1,636.6 1201.7,638.8 1203.3,640.1 1204.9,640.9 1206.5,641.2 1208.1,641.1 1209.7,640.6 1211.3,639.6 1212.9,638.0 1214.5,639.9 1216.1,641.2 1217.7,642.2 1219.3,642.8 1220.8,643.3 1222.4,643.6 1224.0,643.8 1225.6,644.0 1227.2,644.1 1373.8,644.3 1375.4,644.1 1377.0,643.2 1378.6,639.6 1380.2,625.5 1381.8,619.0 1383.4,635.7 1385.0,636.8 1386.6,641.2 1388.2,642.4 1389.8,640.8 1391.4,632.0 1393.0,616.2 1394.6,637.4 1396.2,642.6 1397.8,644.0 1399.3,644.3 1404.1,644.4"/>
<polygon fill="#000818" points="1017.8,647.9 1174.0,647.6 1175.6,647.5 1177.2,647.4 1178.8,647.1 1180.4,646.8 1182.0,646.4 1183.6,645.7 1185.2,644.8 1186.7,643.5 1188.3,641.6 1189.9,638.9 1191.5,640.1 1193.1,641.5 1194.7,642.4 1196.3,643.2 1197.9,644.4 1199.5,645.1 1201.1,645.4 1202.7,645.4 1204.3,645.1 1205.9,644.4 1207.5,643.3 1209.1,641.7 1210.7,643.5 1212.2,644.8 1213.8,645.7 1215.4,646.3 1217.0,646.8 1218.6,647.1 1220.2,647.3 1221.8,647.5 1223.4,647.6 1370.0,647.8 1371.6,647.4 1373.2,646.1 1374.8,641.0 1376.4,620.7 1378.0,611.5 1379.6,636.5 1381.2,639.7 1382.8,644.7 1384.4,646.5 1386.0,646.7 1387.6,645.0 1389.2,641.6 1390.7,646.3 1392.3,647.5 1393.9,647.8 1400.3,647.9 1396.5,651.4 1014.0,651.4"/>
<polyline fill="none" stroke="#373ed3" stroke-width="1.8" stroke-dasharray="2.7 1.8" points="1017.8,647.9 1174.0,647.6 1175.6,647.5 1177.2,647.4 1178.8,647.1 1180.4,646.8 1182.0,646.4 1183.6,645.7 1185.2,644.8 1186.7,643.5 1188.3,641.6 1189.9,638.9 1191.5,640.1 1193.1,641.5 1194.7,642.4 1196.3,643.2 1197.9,644.4 1199.5,645.1 1201.1,645.4 1202.7,645.4 1204.3,645.1 1205.9,644.4 1207.5,643.3 1209.1,641.7 1210.7,643.5 1212.2,644.8 1213.8,645.7 1215.4,646.3 1217.0,646.8 1218.6,647.1 1220.2,647.3 1221.8,647.5 1223.4,647.6 1370.0,647.8 1371.6,647.4 1373.2,646.1 1374.8,641.0 1376.4,620.7 1378.0,611.5 1379.6,636.5 1381.2,639.7 1382.8,644.7 1384.4,646.5 1386.0,646.7 1387.6,645.0 1389.2,641.6 1390.7,646.3 1392.3,647.5 1393.9,647.8 1400.3,647.9"/>
<polygon fill="#000818" points="1014.0,651.4 1168.6,651.2 1170.2,651.1 1171.8,651.0 1173.4,650.8 1175.0,650.5 1176.6,650.1 1178.1,649.6 1179.7,648.8 1181.3,647.7 1182.9,646.2 1184.5,644.0 1186.1,640.8 1187.7,641.1 1189.3,643.4 1190.9,645.5 1192.5,646.9 1194.1,648.0 1195.7,648.7 1197.3,649.0 1198.9,648.9 1200.5,648.6 1202.1,647.9 1203.6,646.8 1205.2,645.2 1206.8,647.0 1208.4,648.3 1210.0,649.2 1211.6,649.8 1213.2,650.3 1214.8,650.6 1216.4,650.8 1218.0,651.0 1219.6,651.1 1367.8,651.1 1369.4,650.4 1371.0,647.6 1372.6,636.7 1374.2,631.5 1375.8,644.1 1377.4,644.2 1379.0,648.5 1380.6,650.2 1382.1,650.8 1383.7,651.0 1385.3,650.8 1386.9,651.2 1396.5,651.4 1392.7,654.9 1010.2,654.9"/>
<polyline fill="none" stroke="#2c40d3" stroke-width="1.8" stroke-dasharray="2.7 1.8" points="1014.0,651.4 1168.6,651.2 1170.2,651.1 1171.8,651.0 1173.4,650.8 1175.0,650.5 1176.6,650.1 1178.1,649.6 1179.7,648.8 1181.3,647.7 1182.9,646.2 1184.5,644.0 1186.1,640.8 1187.7,641.1 1189.3,643.4 1190.9,645.5 1192.5,646.9 1194.1,648.0 1195.7,648.7 1197.3,649.0 1198.9,648.9 1200.5,648.6 1202.1,647.9 1203.6,646.8 1205.2,645.2 1206.8,647.0 1208.4,648.3 1210.0,649.2 1211.6,649.8 1213.2,650.3 1214.8,650.6 1216.4,650.8 1218.0,651.0 1219.6,651.1 1367.8,651.1 1369.4,650.4 1371.0,647.6 1372.6,636.7 1374.2,631.5 1375.8,644.1 1377.4,644.2 1379.0,648.5 1380.6,650.2 1382.1,650.8 1383.7,651.0 1385.3,650.8 1386.9,651.2 1396.5,651.4"/>
<polygon fill="#000818" points="1010.2,654.9 1164.8,654.6 1166.4,654.5 1168.0,654.3 1169.5,654.1 1171.1,653.7 1172.7,653.3 1174.3,652.5 1175.9,651.5 1177.5,650.1 1179.1,648.0 1180.7,645.0 1182.3,640.6 1183.9,639.4 1185.5,642.8 1187.1,646.4 1188.7,648.8 1190.3,650.4 1191.9,651.4 1193.5,651.9 1195.0,652.1 1196.6,651.8 1198.2,651.2 1199.8,650.2 1201.4,648.6 1203.0,650.4 1204.6,651.7 1206.2,652.7 1207.8,653.3 1209.4,653.8 1211.0,654.1 1212.6,654.3 1214.2,654.5 1215.8,654.6 1365.6,654.6 1367.2,654.0 1368.8,651.6 1370.4,650.1 1372.0,651.4 1373.5,648.6 1375.1,652.2 1376.7,653.7 1378.3,654.4 1379.9,654.7 1392.7,654.9 1388.8,658.4 1006.3,658.4"/>
<polyline fill="none" stroke="#2444d1" stroke-width="1.8" stroke-dasharray="2.7 1.8" points="1010.2,654.9 1164.8,654.6 1166.4,654.5 1168.0,654.3 1169.5,654.1 1171.1,653.7 1172.7,653.3 1174.3,652.5 1175.9,651.5 1177.5,650.1 1179.1,648.0 1180.7,645.0 1182.3,640.6 1183.9,639.4 1185.5,642.8 1187.1,646.4 1188.7,648.8 1190.3,650.4 1191.9,651.4 1193.5,651.9 1195.0,652.1 1196.6,651.8 1198.2,651.2 1199.8,650.2 1201.4,648.6 1203.0,650.4 1204.6,651.7 1206.2,652.7 1207.8,653.3 1209.4,653.8 1211.0,654.1 1212.6,654.3 1214.2,654.5 1215.8,654.6 1365.6,654.6 1367.2,654.0 1368.8,651.6 1370.4,650.1 1372.0,651.4 1373.5,648.6 1375.1,652.2 1376.7,653.7 1378.3,654.4 1379.9,654.7 1392.7,654.9"/>
<polygon fill="#000818" points="1006.4,658.4 1159.4,658.1 1160.9,658.0 1162.5,657.9 1164.1,657.6 1165.7,657.3 1167.3,656.9 1168.9,656.2 1170.5,655.2 1172.1,653.9 1173.7,651.9 1175.3,649.0 1176.9,644.8 1178.5,638.9 1180.1,635.1 1181.7,640.2 1183.3,645.7 1184.9,649.5 1186.4,652.0 1188.0,653.6 1189.6,654.5 1191.2,654.9 1192.8,654.9 1194.4,654.4 1196.0,653.5 1197.6,651.9 1199.2,653.8 1200.8,655.2 1202.4,656.1 1204.0,656.8 1205.6,657.2 1207.2,657.6 1208.8,657.8 1210.4,658.0 1211.9,658.1 1363.4,658.1 1364.9,657.7 1366.5,657.0 1368.1,655.7 1369.7,652.3 1371.3,655.7 1372.9,657.2 1374.5,657.8 1376.1,658.1 1388.9,658.4 1385.0,661.9 1002.5,661.9"/>
<polyline fill="none" stroke="#234fcb" stroke-width="1.8" stroke-dasharray="2.7 1.8" points="1006.4,658.4 1159.4,658.1 1160.9,658.0 1162.5,657.9 1164.1,657.6 1165.7,657.3 1167.3,656.9 1168.9,656.2 1170.5,655.2 1172.1,653.9 1173.7,651.9 1175.3,649.0 1176.9,644.8 1178.5,638.9 1180.1,635.1 1181.7,640.2 1183.3,645.7 1184.9,649.5 1186.4,652.0 1188.0,653.6 1189.6,654.5 1191.2,654.9 1192.8,654.9 1194.4,654.4 1196.0,653.5 1197.6,651.9 1199.2,653.8 1200.8,655.2 1202.4,656.1 1204.0,656.8 1205.6,657.2 1207.2,657.6 1208.8,657.8 1210.4,658.0 1211.9,658.1 1363.4,658.1 1364.9,657.7 1366.5,657.0 1368.1,655.7 1369.7,652.3 1371.3,655.7 1372.9,657.2 1374.5,657.8 1376.1,658.1 1388.9,658.4"/>
<polygon fill="#000818" points="1002.5,661.9 1153.9,661.6 1155.5,661.6 1157.1,661.4 1158.7,661.2 1160.3,660.9 1161.9,660.5 1163.5,660.0 1165.1,659.1 1166.7,657.9 1168.3,656.1 1169.9,653.6 1171.5,649.9 1173.1,644.5 1174.7,636.8 1176.3,630.5 1177.8,637.2 1179.4,644.8 1181.0,649.9 1182.6,653.4 1184.2,655.6 1185.8,657.0 1187.4,657.8 1189.0,657.9 1190.6,657.6 1192.2,656.8 1193.8,655.3 1195.4,657.2 1197.0,658.6 1198.6,659.5 1200.2,660.2 1201.8,660.7 1203.3,661.0 1204.9,661.3 1206.5,661.4 1208.1,661.6 1359.5,661.6 1361.1,661.4 1362.7,660.7 1364.3,659.2 1365.9,655.8 1367.5,659.1 1369.1,660.2 1370.7,661.0 1372.3,661.5 1373.9,661.7 1385.0,661.9 1381.2,665.4 998.7,665.4"/>
<polyline fill="none" stroke="#225ac4" stroke-width="1.8" stroke-dasharray="2.7 1.8" points="1002.5,661.9 1153.9,661.6 1155.5,661.6 1157.1,661.4 1158.7,661.2 1160.3,660.9 1161.9,660.5 1163.5,660.0 1165.1,659.1 1166.7,657.9 1168.3,656.1 1169.9,653.6 1171.5,649.9 1173.1,644.5 1174.7,636.8 1176.3,630.5 1177.8,637.2 1179.4,644.8 1181.0,649.9 1182.6,653.4 1184.2,655.6 1185.8,657.0 1187.4,657.8 1189.0,657.9 1190.6,657.6 1192.2,656.8 1193.8,655.3 1195.4,657.2 1197.0,658.6 1198.6,659.5 1200.2,660.2 1201.8,660.7 1203.3,661.0 1204.9,661.3 1206.5,661.4 1208.1,661.6 1359.5,661.6 1361.1,661.4 1362.7,660.7 1364.3,659.2 1365.9,655.8 1367.5,659.1 1369.1,660.2 1370.7,661.0 1372.3,661.5 1373.9,661.7 1385.0,661.9"/>
<polygon fill="#000818" points="998.7,665.3 1150.1,665.1 1151.7,665.0 1153.3,664.8 1154.9,664.6 1156.5,664.3 1158.1,663.9 1159.7,663.2 1161.3,662.2 1162.9,660.8 1164.5,658.8 1166.1,655.9 1167.7,651.6 1169.2,645.5 1170.8,636.6 1172.4,628.6 1174.0,636.4 1175.6,645.3 1177.2,651.4 1178.8,655.5 1180.4,658.2 1182.0,659.9 1183.6,660.8 1185.2,661.1 1186.8,660.9 1188.4,660.1 1190.0,658.7 1191.6,660.6 1193.2,662.0 1194.7,663.0 1196.3,663.7 1197.9,664.2 1199.5,664.5 1201.1,664.8 1202.7,664.9 1204.3,665.1 1355.7,665.1 1357.3,664.8 1358.9,664.2 1360.5,662.7 1362.1,659.1 1363.7,661.9 1365.3,660.9 1366.9,662.4 1368.5,664.5 1370.1,665.1 1381.2,665.3 1377.4,668.8 994.9,668.8"/>
<polyline fill="none" stroke="#2164be" stroke-width="1.8" stroke-dasharray="2.7 1.8" points="998.7,665.3 1150.1,665.1 1151.7,665.0 1153.3,664.8 1154.9,664.6 1156.5,664.3 1158.1,663.9 1159.7,663.2 1161.3,662.2 1162.9,660.8 1164.5,658.8 1166.1,655.9 1167.7,651.6 1169.2,645.5 1170.8,636.6 1172.4,628.6 1174.0,636.4 1175.6,645.3 1177.2,651.4 1178.8,655.5 1180.4,658.2 1182.0,659.9 1183.6,660.8 1185.2,661.1 1186.8,660.9 1188.4,660.1 1190.0,658.7 1191.6,660.6 1193.2,662.0 1194.7,663.0 1196.3,663.7 1197.9,664.2 1199.5,664.5 1201.1,664.8 1202.7,664.9 1204.3,665.1 1355.7,665.1 1357.3,664.8 1358.9,664.2 1360.5,662.7 1362.1,659.1 1363.7,661.9 1365.3,660.9 1366.9,662.4 1368.5,664.5 1370.1,665.1 1381.2,665.3"/>
<polygon fill="#000818" points="994.9,668.8 1146.3,668.6 1147.9,668.5 1149.5,668.3 1151.1,668.1 1152.7,667.8 1154.3,667.3 1155.9,666.7 1157.5,665.7 1159.0,664.3 1160.6,662.3 1162.2,659.4 1163.8,655.1 1165.4,648.9 1167.0,640.0 1168.6,632.0 1170.2,639.9 1171.8,648.8 1173.4,654.9 1175.0,659.0 1176.6,661.7 1178.2,663.4 1179.8,664.3 1181.4,664.6 1183.0,664.4 1184.5,663.6 1186.1,662.1 1187.7,664.1 1189.3,665.5 1190.9,666.5 1192.5,667.2 1194.1,667.7 1195.7,668.0 1197.3,668.3 1198.9,668.4 1200.5,668.5 1351.9,668.6 1353.5,668.3 1355.1,667.6 1356.7,666.0 1358.3,662.1 1359.9,663.1 1361.5,655.2 1363.0,658.9 1364.6,666.3 1366.2,668.1 1367.8,668.6 1377.4,668.8 1373.6,672.3 991.1,672.3"/>
<polyline fill="none" stroke="#206fb7" stroke-width="1.8" stroke-dasharray="2.7 1.8" points="994.9,668.8 1146.3,668.6 1147.9,668.5 1149.5,668.3 1151.1,668.1 1152.7,667.8 1154.3,667.3 1155.9,666.7 1157.5,665.7 1159.0,664.3 1160.6,662.3 1162.2,659.4 1163.8,655.1 1165.4,648.9 1167.0,640.0 1168.6,632.0 1170.2,639.9 1171.8,648.8 1173.4,654.9 1175.0,659.0 1176.6,661.7 1178.2,663.4 1179.8,664.3 1181.4,664.6 1183.0,664.4 1184.5,663.6 1186.1,662.1 1187.7,664.1 1189.3,665.5 1190.9,666.5 1192.5,667.2 1194.1,667.7 1195.7,668.0 1197.3,668.3 1198.9,668.4 1200.5,668.5 1351.9,668.6 1353.5,668.3 1355.1,667.6 1356.7,666.0 1358.3,662.1 1359.9,663.1 1361.5,655.2 1363.0,658.9 1364.6,666.3 1366.2,668.1 1367.8,668.6 1377.4,668.8"/>
<polygon fill="#000818" points="991.1,672.3 1142.5,672.1 1144.1,672.0 1145.7,671.9 1147.3,671.7 1148.9,671.4 1150.4,671.0 1152.0,670.4 1153.6,669.6 1155.2,668.3 1156.8,666.6 1158.4,664.0 1160.0,660.3 1161.6,654.9 1163.2,647.1 1164.8,640.8 1166.4,647.6 1168.0,655.2 1169.6,660.3 1171.2,663.8 1172.8,666.1 1174.4,667.5 1175.9,668.2 1177.5,668.4 1179.1,668.1 1180.7,667.2 1182.3,665.7 1183.9,667.7 1185.5,669.0 1187.1,670.0 1188.7,670.7 1190.3,671.2 1191.9,671.5 1193.5,671.7 1195.1,671.9 1196.7,672.0 1348.1,672.1 1349.7,671.8 1351.3,671.1 1352.9,669.3 1354.4,664.6 1356.0,663.0 1357.6,644.2 1359.2,651.4 1360.8,667.0 1362.4,671.0 1364.0,672.0 1365.6,672.2 1373.6,672.3 1369.7,675.8 987.2,675.8"/>
<polyline fill="none" stroke="#1f7ab1" stroke-width="1.8" stroke-dasharray="2.7 1.8" points="991.1,672.3 1142.5,672.1 1144.1,672.0 1145.7,671.9 1147.3,671.7 1148.9,671.4 1150.4,671.0 1152.0,670.4 1153.6,669.6 1155.2,668.3 1156.8,666.6 1158.4,664.0 1160.0,660.3 1161.6,654.9 1163.2,647.1 1164.8,640.8 1166.4,647.6 1168.0,655.2 1169.6,660.3 1171.2,663.8 1172.8,666.1 1174.4,667.5 1175.9,668.2 1177.5,668.4 1179.1,668.1 1180.7,667.2 1182.3,665.7 1183.9,667.7 1185.5,669.0 1187.1,670.0 1188.7,670.7 1190.3,671.2 1191.9,671.5 1193.5,671.7 1195.1,671.9 1196.7,672.0 1348.1,672.1 1349.7,671.8 1351.3,671.1 1352.9,669.3 1354.4,664.6 1356.0,663.0 1357.6,644.2 1359.2,651.4 1360.8,667.0 1362.4,671.0 1364.0,672.0 1365.6,672.2 1373.6,672.3"/>
<polygon fill="#000818" points="987.3,675.8 1140.3,675.6 1141.8,675.5 1143.4,675.3 1145.0,675.1 1146.6,674.8 1148.2,674.3 1149.8,673.6 1151.4,672.7 1153.0,671.3 1154.6,669.3 1156.2,666.4 1157.8,662.2 1159.4,656.2 1161.0,652.4 1162.6,657.5 1164.2,663.1 1165.8,666.9 1167.3,669.4 1168.9,671.0 1170.5,671.9 1172.1,672.4 1173.7,672.4 1175.3,671.9 1176.9,670.9 1178.5,669.4 1180.1,671.3 1181.7,672.6 1183.3,673.5 1184.9,674.2 1186.5,674.7 1188.1,675.0 1189.7,675.2 1191.3,675.4 1192.8,675.5 1344.3,675.6 1345.8,675.3 1347.4,674.5 1349.0,672.7 1350.6,667.7 1352.2,664.9 1353.8,641.6 1355.4,650.2 1357.0,669.3 1358.6,674.2 1360.2,675.4 1361.8,675.7 1369.8,675.8 1365.9,679.3 983.4,679.3"/>
<polyline fill="none" stroke="#1e84aa" stroke-width="1.8" stroke-dasharray="2.7 1.8" points="987.3,675.8 1140.3,675.6 1141.8,675.5 1143.4,675.3 1145.0,675.1 1146.6,674.8 1148.2,674.3 1149.8,673.6 1151.4,672.7 1153.0,671.3 1154.6,669.3 1156.2,666.4 1157.8,662.2 1159.4,656.2 1161.0,652.4 1162.6,657.5 1164.2,663.1 1165.8,666.9 1167.3,669.4 1168.9,671.0 1170.5,671.9 1172.1,672.4 1173.7,672.4 1175.3,671.9 1176.9,670.9 1178.5,669.4 1180.1,671.3 1181.7,672.6 1183.3,673.5 1184.9,674.2 1186.5,674.7 1188.1,675.0 1189.7,675.2 1191.3,675.4 1192.8,675.5 1344.3,675.6 1345.8,675.3 1347.4,674.5 1349.0,672.7 1350.6,667.7 1352.2,664.9 1353.8,641.6 1355.4,650.2 1357.0,669.3 1358.6,674.2 1360.2,675.4 1361.8,675.7 1369.8,675.8"/>
<polygon fill="#000818" points="983.4,679.3 1138.0,679.0 1139.6,678.9 1141.2,678.7 1142.8,678.5 1144.4,678.2 1146.0,677.7 1147.6,677.0 1149.2,675.9 1150.8,674.5 1152.4,672.4 1154.0,669.3 1155.6,665.0 1157.2,663.7 1158.7,667.2 1160.3,670.8 1161.9,673.2 1163.5,674.8 1165.1,675.8 1166.7,676.4 1168.3,676.5 1169.9,676.3 1171.5,675.7 1173.1,674.6 1174.7,673.0 1176.3,674.8 1177.9,676.2 1179.5,677.1 1181.1,677.7 1182.7,678.2 1184.2,678.5 1185.8,678.7 1187.4,678.9 1189.0,679.0 1340.4,679.1 1342.0,678.8 1343.6,678.0 1345.2,676.2 1346.8,671.6 1348.4,670.8 1350.0,655.1 1351.6,661.3 1353.2,674.7 1354.8,678.1 1356.4,679.0 1358.0,679.2 1365.9,679.3 1362.1,682.8 979.6,682.8"/>
<polyline fill="none" stroke="#1c8fa4" stroke-width="1.8" stroke-dasharray="2.7 1.8" points="983.4,679.3 1138.0,679.0 1139.6,678.9 1141.2,678.7 1142.8,678.5 1144.4,678.2 1146.0,677.7 1147.6,677.0 1149.2,675.9 1150.8,674.5 1152.4,672.4 1154.0,669.3 1155.6,665.0 1157.2,663.7 1158.7,667.2 1160.3,670.8 1161.9,673.2 1163.5,674.8 1165.1,675.8 1166.7,676.4 1168.3,676.5 1169.9,676.3 1171.5,675.7 1173.1,674.6 1174.7,673.0 1176.3,674.8 1177.9,676.2 1179.5,677.1 1181.1,677.7 1182.7,678.2 1184.2,678.5 1185.8,678.7 1187.4,678.9 1189.0,679.0 1340.4,679.1 1342.0,678.8 1343.6,678.0 1345.2,676.2 1346.8,671.6 1348.4,670.8 1350.0,655.1 1351.6,661.3 1353.2,674.7 1354.8,678.1 1356.4,679.0 1358.0,679.2 1365.9,679.3"/>
<polygon fill="#000818" points="979.6,682.8 1135.8,682.5 1137.4,682.4 1139.0,682.2 1140.6,681.9 1142.2,681.5 1143.8,681.0 1145.4,680.3 1147.0,679.2 1148.6,677.6 1150.1,675.4 1151.7,672.2 1153.3,672.7 1154.9,675.1 1156.5,677.3 1158.1,678.8 1159.7,679.7 1161.3,680.3 1162.9,680.5 1164.5,680.4 1166.1,680.0 1167.7,679.3 1169.3,678.2 1170.9,676.6 1172.5,678.4 1174.1,679.7 1175.6,680.6 1177.2,681.2 1178.8,681.7 1180.4,682.0 1182.0,682.2 1183.6,682.4 1185.2,682.5 1336.6,682.5 1338.2,682.2 1339.8,681.4 1341.4,679.4 1343.0,674.8 1344.6,677.3 1346.2,672.3 1347.8,675.3 1349.4,680.8 1351.0,682.2 1352.6,682.6 1362.1,682.8 1358.3,686.3 975.8,686.3"/>
<polyline fill="none" stroke="#1b9a9d" stroke-width="1.8" stroke-dasharray="2.7 1.8" points="979.6,682.8 1135.8,682.5 1137.4,682.4 1139.0,682.2 1140.6,681.9 1142.2,681.5 1143.8,681.0 1145.4,680.3 1147.0,679.2 1148.6,677.6 1150.1,675.4 1151.7,672.2 1153.3,672.7 1154.9,675.1 1156.5,677.3 1158.1,678.8 1159.7,679.7 1161.3,680.3 1162.9,680.5 1164.5,680.4 1166.1,680.0 1167.7,679.3 1169.3,678.2 1170.9,676.6 1172.5,678.4 1174.1,679.7 1175.6,680.6 1177.2,681.2 1178.8,681.7 1180.4,682.0 1182.0,682.2 1183.6,682.4 1185.2,682.5 1336.6,682.5 1338.2,682.2 1339.8,681.4 1341.4,679.4 1343.0,674.8 1344.6,677.3 1346.2,672.3 1347.8,675.3 1349.4,680.8 1351.0,682.2 1352.6,682.6 1362.1,682.8"/>
<polygon fill="#000818" points="975.8,686.3 1132.0,686.0 1133.6,685.9 1135.2,685.8 1136.8,685.6 1138.4,685.3 1140.0,684.8 1141.5,684.2 1143.1,683.3 1144.7,682.1 1146.3,680.3 1147.9,677.8 1149.5,679.2 1151.1,681.0 1152.7,682.4 1154.3,683.4 1155.9,683.9 1157.5,684.2 1159.1,684.2 1160.7,684.0 1162.3,683.5 1163.9,682.7 1165.5,681.6 1167.0,680.0 1168.6,681.8 1170.2,683.1 1171.8,684.1 1173.4,684.7 1175.0,685.2 1176.6,685.5 1178.2,685.7 1179.8,685.9 1181.4,686.0 1331.2,686.1 1332.8,685.9 1334.4,685.3 1336.0,684.0 1337.6,681.1 1339.2,674.3 1340.8,680.6 1342.4,682.0 1344.0,683.8 1345.5,685.5 1347.1,686.0 1358.3,686.3 1354.5,689.8 972.0,689.8"/>
<polyline fill="none" stroke="#1d9c92" stroke-width="1.8" stroke-dasharray="2.7 1.8" points="975.8,686.3 1132.0,686.0 1133.6,685.9 1135.2,685.8 1136.8,685.6 1138.4,685.3 1140.0,684.8 1141.5,684.2 1143.1,683.3 1144.7,682.1 1146.3,680.3 1147.9,677.8 1149.5,679.2 1151.1,681.0 1152.7,682.4 1154.3,683.4 1155.9,683.9 1157.5,684.2 1159.1,684.2 1160.7,684.0 1162.3,683.5 1163.9,682.7 1165.5,681.6 1167.0,680.0 1168.6,681.8 1170.2,683.1 1171.8,684.1 1173.4,684.7 1175.0,685.2 1176.6,685.5 1178.2,685.7 1179.8,685.9 1181.4,686.0 1331.2,686.1 1332.8,685.9 1334.4,685.3 1336.0,684.0 1337.6,681.1 1339.2,674.3 1340.8,680.6 1342.4,682.0 1344.0,683.8 1345.5,685.5 1347.1,686.0 1358.3,686.3"/>
<polygon fill="#000818" points="972.0,689.8 1128.2,689.5 1129.8,689.4 1131.4,689.3 1132.9,689.1 1134.5,688.8 1136.1,688.4 1137.7,687.9 1139.3,687.1 1140.9,686.0 1142.5,684.4 1144.1,682.2 1145.7,684.0 1147.3,685.5 1148.9,686.6 1150.5,687.3 1152.1,687.6 1153.7,687.7 1155.3,687.6 1156.9,687.2 1158.4,686.4 1160.0,685.5 1161.6,684.7 1163.2,683.2 1164.8,685.1 1166.4,686.5 1168.0,687.5 1169.6,688.1 1171.2,688.6 1172.8,689.0 1174.4,689.2 1176.0,689.4 1177.6,689.5 1325.8,689.6 1327.4,689.4 1329.0,688.9 1330.6,687.9 1332.2,685.4 1333.8,679.7 1335.4,666.7 1336.9,679.7 1338.5,685.1 1340.1,687.7 1341.7,688.9 1343.3,689.4 1344.9,689.6 1354.5,689.8 1350.6,693.3 968.1,693.3"/>
<polyline fill="none" stroke="#1f9c86" stroke-width="1.8" stroke-dasharray="2.7 1.8" points="972.0,689.8 1128.2,689.5 1129.8,689.4 1131.4,689.3 1132.9,689.1 1134.5,688.8 1136.1,688.4 1137.7,687.9 1139.3,687.1 1140.9,686.0 1142.5,684.4 1144.1,682.2 1145.7,684.0 1147.3,685.5 1148.9,686.6 1150.5,687.3 1152.1,687.6 1153.7,687.7 1155.3,687.6 1156.9,687.2 1158.4,686.4 1160.0,685.5 1161.6,684.7 1163.2,683.2 1164.8,685.1 1166.4,686.5 1168.0,687.5 1169.6,688.1 1171.2,688.6 1172.8,689.0 1174.4,689.2 1176.0,689.4 1177.6,689.5 1325.8,689.6 1327.4,689.4 1329.0,688.9 1330.6,687.9 1332.2,685.4 1333.8,679.7 1335.4,666.7 1336.9,679.7 1338.5,685.1 1340.1,687.7 1341.7,688.9 1343.3,689.4 1344.9,689.6 1354.5,689.8"/>
<polygon fill="#000818" points="968.2,693.3 1124.3,693.0 1125.9,692.9 1127.5,692.8 1129.1,692.6 1130.7,692.3 1132.3,692.0 1133.9,691.4 1135.5,690.7 1137.1,689.6 1138.7,688.1 1140.3,685.9 1141.9,687.9 1143.5,689.2 1145.1,690.2 1146.7,690.7 1148.3,690.9 1149.8,690.8 1151.4,690.3 1153.0,689.5 1154.6,688.2 1156.2,687.2 1157.8,686.9 1159.4,685.8 1161.0,688.0 1162.6,689.6 1164.2,690.7 1165.8,691.4 1167.4,692.0 1169.0,692.4 1170.6,692.6 1172.2,692.8 1173.8,692.9 1175.3,693.0 1322.0,693.0 1323.6,692.6 1325.2,691.8 1326.8,689.8 1328.3,685.4 1329.9,675.2 1331.5,652.5 1333.1,675.5 1334.7,685.5 1336.3,689.9 1337.9,691.8 1339.5,692.6 1341.1,693.0 1350.7,693.3 1346.8,696.8 964.3,696.8"/>
<polyline fill="none" stroke="#219c79" stroke-width="1.8" stroke-dasharray="2.7 1.8" points="968.2,693.3 1124.3,693.0 1125.9,692.9 1127.5,692.8 1129.1,692.6 1130.7,692.3 1132.3,692.0 1133.9,691.4 1135.5,690.7 1137.1,689.6 1138.7,688.1 1140.3,685.9 1141.9,687.9 1143.5,689.2 1145.1,690.2 1146.7,690.7 1148.3,690.9 1149.8,690.8 1151.4,690.3 1153.0,689.5 1154.6,688.2 1156.2,687.2 1157.8,686.9 1159.4,685.8 1161.0,688.0 1162.6,689.6 1164.2,690.7 1165.8,691.4 1167.4,692.0 1169.0,692.4 1170.6,692.6 1172.2,692.8 1173.8,692.9 1175.3,693.0 1322.0,693.0 1323.6,692.6 1325.2,691.8 1326.8,689.8 1328.3,685.4 1329.9,675.2 1331.5,652.5 1333.1,675.5 1334.7,685.5 1336.3,689.9 1337.9,691.8 1339.5,692.6 1341.1,693.0 1350.7,693.3"/>
<polygon fill="#000818" points="964.3,696.7 1120.5,696.5 1122.1,696.4 1123.7,696.3 1125.3,696.1 1126.9,695.8 1128.5,695.5 1130.1,694.9 1131.7,694.2 1133.3,693.1 1134.9,691.6 1136.5,689.4 1138.1,691.3 1139.7,692.6 1141.2,693.3 1142.8,693.7 1144.4,693.6 1146.0,693.1 1147.6,692.1 1149.2,690.5 1150.8,688.1 1152.4,686.8 1154.0,687.7 1155.6,687.5 1157.2,690.3 1158.8,692.2 1160.4,693.6 1162.0,694.5 1163.6,695.2 1165.2,695.7 1166.7,696.0 1168.3,696.2 1169.9,696.4 1171.5,696.5 1316.6,696.6 1318.2,696.3 1319.7,695.8 1321.3,694.6 1322.9,691.8 1324.5,685.4 1326.1,670.6 1327.7,640.7 1329.3,672.4 1330.9,686.2 1332.5,692.1 1334.1,694.7 1335.7,695.9 1337.3,696.4 1338.9,696.6 1346.8,696.7 1343.0,700.2 960.5,700.2"/>
<polyline fill="none" stroke="#239d6d" stroke-width="1.8" stroke-dasharray="2.7 1.8" points="964.3,696.7 1120.5,696.5 1122.1,696.4 1123.7,696.3 1125.3,696.1 1126.9,695.8 1128.5,695.5 1130.1,694.9 1131.7,694.2 1133.3,693.1 1134.9,691.6 1136.5,689.4 1138.1,691.3 1139.7,692.6 1141.2,693.3 1142.8,693.7 1144.4,693.6 1146.0,693.1 1147.6,692.1 1149.2,690.5 1150.8,688.1 1152.4,686.8 1154.0,687.7 1155.6,687.5 1157.2,690.3 1158.8,692.2 1160.4,693.6 1162.0,694.5 1163.6,695.2 1165.2,695.7 1166.7,696.0 1168.3,696.2 1169.9,696.4 1171.5,696.5 1316.6,696.6 1318.2,696.3 1319.7,695.8 1321.3,694.6 1322.9,691.8 1324.5,685.4 1326.1,670.6 1327.7,640.7 1329.3,672.4 1330.9,686.2 1332.5,692.1 1334.1,694.7 1335.7,695.9 1337.3,696.4 1338.9,696.6 1346.8,696.7"/>
<polygon fill="#000818" points="960.5,700.2 1116.7,700.0 1118.3,699.9 1119.9,699.8 1121.5,699.6 1123.1,699.3 1124.7,698.9 1126.3,698.4 1127.9,697.6 1129.5,696.4 1131.1,694.9 1132.6,692.6 1134.2,694.5 1135.8,695.6 1137.4,696.2 1139.0,696.2 1140.6,695.7 1142.2,694.6 1143.8,692.8 1145.4,689.8 1147.0,685.4 1148.6,683.7 1150.2,686.7 1151.8,687.9 1153.4,691.6 1155.0,694.2 1156.6,696.1 1158.1,697.3 1159.7,698.2 1161.3,698.8 1162.9,699.3 1164.5,699.6 1166.1,699.8 1167.7,699.9 1169.3,700.0 1312.7,700.0 1314.3,699.7 1315.9,699.1 1317.5,697.7 1319.1,694.3 1320.7,686.6 1322.3,668.9 1323.9,641.3 1325.5,674.6 1327.1,689.1 1328.7,695.4 1330.3,698.1 1331.9,699.3 1333.5,699.8 1335.1,700.1 1343.0,700.2 1339.2,703.7 956.7,703.7"/>
<polyline fill="none" stroke="#259d61" stroke-width="1.8" stroke-dasharray="2.7 1.8" points="960.5,700.2 1116.7,700.0 1118.3,699.9 1119.9,699.8 1121.5,699.6 1123.1,699.3 1124.7,698.9 1126.3,698.4 1127.9,697.6 1129.5,696.4 1131.1,694.9 1132.6,692.6 1134.2,694.5 1135.8,695.6 1137.4,696.2 1139.0,696.2 1140.6,695.7 1142.2,694.6 1143.8,692.8 1145.4,689.8 1147.0,685.4 1148.6,683.7 1150.2,686.7 1151.8,687.9 1153.4,691.6 1155.0,694.2 1156.6,696.1 1158.1,697.3 1159.7,698.2 1161.3,698.8 1162.9,699.3 1164.5,699.6 1166.1,699.8 1167.7,699.9 1169.3,700.0 1312.7,700.0 1314.3,699.7 1315.9,699.1 1317.5,697.7 1319.1,694.3 1320.7,686.6 1322.3,668.9 1323.9,641.3 1325.5,674.6 1327.1,689.1 1328.7,695.4 1330.3,698.1 1331.9,699.3 1333.5,699.8 1335.1,700.1 1343.0,700.2"/>
<polygon fill="#000818" points="956.7,703.7 1112.9,703.5 1114.5,703.4 1116.1,703.2 1117.7,703.0 1119.3,702.7 1120.9,702.3 1122.5,701.7 1124.0,700.9 1125.6,699.7 1127.2,698.0 1128.8,695.5 1130.4,697.4 1132.0,698.4 1133.6,698.8 1135.2,698.4 1136.8,697.4 1138.4,695.5 1140.0,692.5 1141.6,687.8 1143.2,680.9 1144.8,678.5 1146.4,684.3 1148.0,687.3 1149.5,692.3 1151.1,695.8 1152.7,698.3 1154.3,699.9 1155.9,701.1 1157.5,701.9 1159.1,702.5 1160.7,702.8 1162.3,703.1 1163.9,703.3 1165.5,703.4 1308.9,703.5 1310.5,703.2 1312.1,702.5 1313.7,700.8 1315.3,697.1 1316.9,688.5 1318.5,668.7 1320.1,652.8 1321.7,681.6 1323.3,694.1 1324.9,699.5 1326.5,701.9 1328.0,702.9 1329.6,703.4 1331.2,703.6 1339.2,703.7 1335.4,707.2 952.9,707.2"/>
<polyline fill="none" stroke="#279d54" stroke-width="1.8" stroke-dasharray="2.7 1.8" points="956.7,703.7 1112.9,703.5 1114.5,703.4 1116.1,703.2 1117.7,703.0 1119.3,702.7 1120.9,702.3 1122.5,701.7 1124.0,700.9 1125.6,699.7 1127.2,698.0 1128.8,695.5 1130.4,697.4 1132.0,698.4 1133.6,698.8 1135.2,698.4 1136.8,697.4 1138.4,695.5 1140.0,692.5 1141.6,687.8 1143.2,680.9 1144.8,678.5 1146.4,684.3 1148.0,687.3 1149.5,692.3 1151.1,695.8 1152.7,698.3 1154.3,699.9 1155.9,701.1 1157.5,701.9 1159.1,702.5 1160.7,702.8 1162.3,703.1 1163.9,703.3 1165.5,703.4 1308.9,703.5 1310.5,703.2 1312.1,702.5 1313.7,700.8 1315.3,697.1 1316.9,688.5 1318.5,668.7 1320.1,652.8 1321.7,681.6 1323.3,694.1 1324.9,699.5 1326.5,701.9 1328.0,702.9 1329.6,703.4 1331.2,703.6 1339.2,703.7"/>
<polygon fill="#000818" points="952.9,707.2 1109.1,706.9 1110.7,706.8 1112.3,706.7 1113.9,706.4 1115.4,706.1 1117.0,705.6 1118.6,704.9 1120.2,704.0 1121.8,702.6 1123.4,700.6 1125.0,697.8 1126.6,699.8 1128.2,700.9 1129.8,701.2 1131.4,700.6 1133.0,699.1 1134.6,696.5 1136.2,692.4 1137.8,686.1 1139.4,676.8 1140.9,673.9 1142.5,682.2 1144.1,687.0 1145.7,693.2 1147.3,697.5 1148.9,700.5 1150.5,702.6 1152.1,704.0 1153.7,705.0 1155.3,705.7 1156.9,706.2 1158.5,706.5 1160.1,706.7 1161.7,706.9 1163.3,707.0 1305.1,707.0 1306.7,706.6 1308.3,705.9 1309.9,704.1 1311.5,700.0 1313.1,690.7 1314.7,669.2 1316.3,666.0 1317.9,689.3 1319.4,699.4 1321.0,703.8 1322.6,705.7 1324.2,706.6 1325.8,706.9 1335.4,707.2 1331.6,710.7 949.1,710.7"/>
<polyline fill="none" stroke="#299d48" stroke-width="1.8" stroke-dasharray="2.7 1.8" points="952.9,707.2 1109.1,706.9 1110.7,706.8 1112.3,706.7 1113.9,706.4 1115.4,706.1 1117.0,705.6 1118.6,704.9 1120.2,704.0 1121.8,702.6 1123.4,700.6 1125.0,697.8 1126.6,699.8 1128.2,700.9 1129.8,701.2 1131.4,700.6 1133.0,699.1 1134.6,696.5 1136.2,692.4 1137.8,686.1 1139.4,676.8 1140.9,673.9 1142.5,682.2 1144.1,687.0 1145.7,693.2 1147.3,697.5 1148.9,700.5 1150.5,702.6 1152.1,704.0 1153.7,705.0 1155.3,705.7 1156.9,706.2 1158.5,706.5 1160.1,706.7 1161.7,706.9 1163.3,707.0 1305.1,707.0 1306.7,706.6 1308.3,705.9 1309.9,704.1 1311.5,700.0 1313.1,690.7 1314.7,669.2 1316.3,666.0 1317.9,689.3 1319.4,699.4 1321.0,703.8 1322.6,705.7 1324.2,706.6 1325.8,706.9 1335.4,707.2"/>
<polygon fill="#000818" points="949.1,710.7 1103.7,710.5 1105.3,710.4 1106.8,710.2 1108.4,710.0 1110.0,709.7 1111.6,709.3 1113.2,708.7 1114.8,707.9 1116.4,706.6 1118.0,704.9 1119.6,702.4 1121.2,698.8 1122.8,701.5 1124.4,703.0 1126.0,703.5 1127.6,703.0 1129.2,701.4 1130.8,698.5 1132.3,693.9 1133.9,686.8 1135.5,676.4 1137.1,673.2 1138.7,682.8 1140.3,688.5 1141.9,695.4 1143.5,700.1 1145.1,703.4 1146.7,705.6 1148.3,707.2 1149.9,708.3 1151.5,709.0 1153.1,709.5 1154.7,709.9 1156.3,710.1 1157.8,710.3 1159.4,710.4 1301.3,710.5 1302.9,710.1 1304.5,709.4 1306.1,707.7 1307.7,703.9 1309.3,695.0 1310.8,674.6 1312.4,678.0 1314.0,696.5 1315.6,704.5 1317.2,708.0 1318.8,709.5 1320.4,710.2 1322.0,710.5 1331.6,710.7 1327.7,714.2 945.2,714.2"/>
<polyline fill="none" stroke="#2b9e3c" stroke-width="1.8" stroke-dasharray="2.7 1.8" points="949.1,710.7 1103.7,710.5 1105.3,710.4 1106.8,710.2 1108.4,710.0 1110.0,709.7 1111.6,709.3 1113.2,708.7 1114.8,707.9 1116.4,706.6 1118.0,704.9 1119.6,702.4 1121.2,698.8 1122.8,701.5 1124.4,703.0 1126.0,703.5 1127.6,703.0 1129.2,701.4 1130.8,698.5 1132.3,693.9 1133.9,686.8 1135.5,676.4 1137.1,673.2 1138.7,682.8 1140.3,688.5 1141.9,695.4 1143.5,700.1 1145.1,703.4 1146.7,705.6 1148.3,707.2 1149.9,708.3 1151.5,709.0 1153.1,709.5 1154.7,709.9 1156.3,710.1 1157.8,710.3 1159.4,710.4 1301.3,710.5 1302.9,710.1 1304.5,709.4 1306.1,707.7 1307.7,703.9 1309.3,695.0 1310.8,674.6 1312.4,678.0 1314.0,696.5 1315.6,704.5 1317.2,708.0 1318.8,709.5 1320.4,710.2 1322.0,710.5 1331.6,710.7"/>
<polygon fill="#000818" points="945.2,714.2 1098.2,714.0 1099.8,713.9 1101.4,713.8 1103.0,713.6 1104.6,713.3 1106.2,712.9 1107.8,712.3 1109.4,711.5 1111.0,710.3 1112.6,708.6 1114.2,706.2 1115.8,702.6 1117.4,697.5 1119.0,701.8 1120.6,704.4 1122.2,705.6 1123.7,705.7 1125.3,704.5 1126.9,702.0 1128.5,697.8 1130.1,691.3 1131.7,681.4 1133.3,678.4 1134.9,687.5 1136.5,692.8 1138.1,699.4 1139.7,704.0 1141.3,707.1 1142.9,709.3 1144.5,710.8 1146.1,711.9 1147.7,712.6 1149.2,713.1 1150.8,713.4 1152.4,713.7 1154.0,713.8 1155.6,713.9 1297.5,714.0 1299.1,713.8 1300.7,713.2 1302.2,712.0 1303.8,709.1 1305.4,702.6 1307.0,687.4 1308.6,690.6 1310.2,704.0 1311.8,709.7 1313.4,712.3 1315.0,713.4 1316.6,713.8 1318.2,714.0 1327.7,714.2 1323.9,717.7 941.4,717.7"/>
<polyline fill="none" stroke="#2d9e2f" stroke-width="1.8" stroke-dasharray="2.7 1.8" points="945.2,714.2 1098.2,714.0 1099.8,713.9 1101.4,713.8 1103.0,713.6 1104.6,713.3 1106.2,712.9 1107.8,712.3 1109.4,711.5 1111.0,710.3 1112.6,708.6 1114.2,706.2 1115.8,702.6 1117.4,697.5 1119.0,701.8 1120.6,704.4 1122.2,705.6 1123.7,705.7 1125.3,704.5 1126.9,702.0 1128.5,697.8 1130.1,691.3 1131.7,681.4 1133.3,678.4 1134.9,687.5 1136.5,692.8 1138.1,699.4 1139.7,704.0 1141.3,707.1 1142.9,709.3 1144.5,710.8 1146.1,711.9 1147.7,712.6 1149.2,713.1 1150.8,713.4 1152.4,713.7 1154.0,713.8 1155.6,713.9 1297.5,714.0 1299.1,713.8 1300.7,713.2 1302.2,712.0 1303.8,709.1 1305.4,702.6 1307.0,687.4 1308.6,690.6 1310.2,704.0 1311.8,709.7 1313.4,712.3 1315.0,713.4 1316.6,713.8 1318.2,714.0 1327.7,714.2"/>
<polygon fill="#000818" points="941.4,717.7 1094.4,717.4 1096.0,717.3 1097.6,717.1 1099.2,716.8 1100.8,716.4 1102.4,715.9 1104.0,715.1 1105.6,713.9 1107.2,712.2 1108.8,709.8 1110.4,706.2 1112.0,701.1 1113.6,693.7 1115.1,700.4 1116.7,704.8 1118.3,707.3 1119.9,708.5 1121.5,708.3 1123.1,706.8 1124.7,703.8 1126.3,698.8 1127.9,691.1 1129.5,688.6 1131.1,695.6 1132.7,699.5 1134.3,705.1 1135.9,708.9 1137.5,711.6 1139.1,713.5 1140.6,714.8 1142.2,715.7 1143.8,716.3 1145.4,716.7 1147.0,717.0 1148.6,717.2 1150.2,717.4 1151.8,717.5 1295.2,717.4 1296.8,717.1 1298.4,716.4 1300.0,714.8 1301.6,711.1 1303.2,702.5 1304.8,702.9 1306.4,711.2 1308.0,714.9 1309.6,716.5 1311.2,717.2 1312.8,717.5 1323.9,717.7 1320.1,721.2 937.6,721.2"/>
<polyline fill="none" stroke="#399b2b" stroke-width="1.8" stroke-dasharray="2.7 1.8" points="941.4,717.7 1094.4,717.4 1096.0,717.3 1097.6,717.1 1099.2,716.8 1100.8,716.4 1102.4,715.9 1104.0,715.1 1105.6,713.9 1107.2,712.2 1108.8,709.8 1110.4,706.2 1112.0,701.1 1113.6,693.7 1115.1,700.4 1116.7,704.8 1118.3,707.3 1119.9,708.5 1121.5,708.3 1123.1,706.8 1124.7,703.8 1126.3,698.8 1127.9,691.1 1129.5,688.6 1131.1,695.6 1132.7,699.5 1134.3,705.1 1135.9,708.9 1137.5,711.6 1139.1,713.5 1140.6,714.8 1142.2,715.7 1143.8,716.3 1145.4,716.7 1147.0,717.0 1148.6,717.2 1150.2,717.4 1151.8,717.5 1295.2,717.4 1296.8,717.1 1298.4,716.4 1300.0,714.8 1301.6,711.1 1303.2,702.5 1304.8,702.9 1306.4,711.2 1308.0,714.9 1309.6,716.5 1311.2,717.2 1312.8,717.5 1323.9,717.7"/>
<polygon fill="#000818" points="937.6,721.2 1089.0,720.9 1090.6,720.8 1092.2,720.6 1093.8,720.4 1095.4,720.0 1097.0,719.5 1098.6,718.7 1100.2,717.7 1101.8,716.1 1103.4,713.8 1105.0,710.5 1106.5,705.6 1108.1,698.6 1109.7,688.5 1111.3,698.2 1112.9,704.6 1114.5,708.8 1116.1,711.2 1117.7,712.2 1119.3,712.0 1120.9,710.5 1122.5,707.4 1124.1,702.5 1125.7,700.7 1127.3,705.0 1128.9,707.0 1130.5,711.3 1132.0,714.3 1133.6,716.4 1135.2,717.8 1136.8,718.9 1138.4,719.6 1140.0,720.1 1141.6,720.4 1143.2,720.6 1144.8,720.8 1146.4,720.9 1293.0,721.0 1294.6,720.8 1296.2,720.3 1297.8,719.2 1299.4,716.6 1301.0,718.0 1302.6,719.8 1304.2,720.6 1305.8,720.9 1320.1,721.2 1316.3,724.7 933.8,724.7"/>
<polyline fill="none" stroke="#469829" stroke-width="1.8" stroke-dasharray="2.7 1.8" points="937.6,721.2 1089.0,720.9 1090.6,720.8 1092.2,720.6 1093.8,720.4 1095.4,720.0 1097.0,719.5 1098.6,718.7 1100.2,717.7 1101.8,716.1 1103.4,713.8 1105.0,710.5 1106.5,705.6 1108.1,698.6 1109.7,688.5 1111.3,698.2 1112.9,704.6 1114.5,708.8 1116.1,711.2 1117.7,712.2 1119.3,712.0 1120.9,710.5 1122.5,707.4 1124.1,702.5 1125.7,700.7 1127.3,705.0 1128.9,707.0 1130.5,711.3 1132.0,714.3 1133.6,716.4 1135.2,717.8 1136.8,718.9 1138.4,719.6 1140.0,720.1 1141.6,720.4 1143.2,720.6 1144.8,720.8 1146.4,720.9 1293.0,721.0 1294.6,720.8 1296.2,720.3 1297.8,719.2 1299.4,716.6 1301.0,718.0 1302.6,719.8 1304.2,720.6 1305.8,720.9 1320.1,721.2"/>
<polygon fill="#000818" points="933.8,724.7 1083.6,724.4 1085.2,724.3 1086.8,724.2 1088.4,724.0 1090.0,723.7 1091.6,723.3 1093.2,722.6 1094.8,721.7 1096.3,720.4 1097.9,718.5 1099.5,715.7 1101.1,711.6 1102.7,705.8 1104.3,697.2 1105.9,684.8 1107.5,696.9 1109.1,705.2 1110.7,710.6 1112.3,714.1 1113.9,716.2 1115.5,717.0 1117.1,716.7 1118.7,715.4 1120.3,712.7 1121.8,711.6 1123.4,713.5 1125.0,713.8 1126.6,717.0 1128.2,719.2 1129.8,720.8 1131.4,721.9 1133.0,722.8 1134.6,723.3 1136.2,723.7 1137.8,724.0 1139.4,724.2 1141.0,724.3 1142.6,724.4 1292.4,724.4 1294.0,724.2 1295.6,723.5 1297.2,723.8 1298.8,724.3 1300.3,724.5 1316.3,724.7 1312.5,728.2 930.0,728.2"/>
<polyline fill="none" stroke="#539626" stroke-width="1.8" stroke-dasharray="2.7 1.8" points="933.8,724.7 1083.6,724.4 1085.2,724.3 1086.8,724.2 1088.4,724.0 1090.0,723.7 1091.6,723.3 1093.2,722.6 1094.8,721.7 1096.3,720.4 1097.9,718.5 1099.5,715.7 1101.1,711.6 1102.7,705.8 1104.3,697.2 1105.9,684.8 1107.5,696.9 1109.1,705.2 1110.7,710.6 1112.3,714.1 1113.9,716.2 1115.5,717.0 1117.1,716.7 1118.7,715.4 1120.3,712.7 1121.8,711.6 1123.4,713.5 1125.0,713.8 1126.6,717.0 1128.2,719.2 1129.8,720.8 1131.4,721.9 1133.0,722.8 1134.6,723.3 1136.2,723.7 1137.8,724.0 1139.4,724.2 1141.0,724.3 1142.6,724.4 1292.4,724.4 1294.0,724.2 1295.6,723.5 1297.2,723.8 1298.8,724.3 1300.3,724.5 1316.3,724.7"/>
<polygon fill="#000818" points="930.0,728.1 1079.8,727.9 1081.4,727.8 1083.0,727.7 1084.6,727.4 1086.2,727.1 1087.7,726.7 1089.3,726.0 1090.9,725.0 1092.5,723.6 1094.1,721.6 1095.7,718.7 1097.3,714.4 1098.9,708.2 1100.5,699.1 1102.1,686.0 1103.7,698.9 1105.3,707.8 1106.9,713.8 1108.5,717.7 1110.1,720.3 1111.7,721.7 1113.2,722.2 1114.8,721.8 1116.4,720.6 1118.0,719.8 1119.6,720.0 1121.2,719.2 1122.8,721.5 1124.4,722.9 1126.0,724.2 1127.6,725.4 1129.2,726.2 1130.8,726.8 1132.4,727.2 1134.0,727.5 1135.6,727.7 1137.2,727.8 1138.7,727.9 1312.5,728.1 1308.6,731.6 926.1,731.6"/>
<polyline fill="none" stroke="#609323" stroke-width="1.8" stroke-dasharray="2.7 1.8" points="930.0,728.1 1079.8,727.9 1081.4,727.8 1083.0,727.7 1084.6,727.4 1086.2,727.1 1087.7,726.7 1089.3,726.0 1090.9,725.0 1092.5,723.6 1094.1,721.6 1095.7,718.7 1097.3,714.4 1098.9,708.2 1100.5,699.1 1102.1,686.0 1103.7,698.9 1105.3,707.8 1106.9,713.8 1108.5,717.7 1110.1,720.3 1111.7,721.7 1113.2,722.2 1114.8,721.8 1116.4,720.6 1118.0,719.8 1119.6,720.0 1121.2,719.2 1122.8,721.5 1124.4,722.9 1126.0,724.2 1127.6,725.4 1129.2,726.2 1130.8,726.8 1132.4,727.2 1134.0,727.5 1135.6,727.7 1137.2,727.8 1138.7,727.9 1312.5,728.1"/>
<polygon fill="#000818" points="926.1,731.6 1076.0,731.4 1077.6,731.3 1079.1,731.2 1080.7,731.0 1082.3,730.7 1083.9,730.3 1085.5,729.7 1087.1,728.8 1088.7,727.5 1090.3,725.7 1091.9,723.0 1093.5,719.1 1095.1,713.4 1096.7,705.2 1098.3,693.2 1099.9,705.0 1101.5,713.1 1103.1,718.7 1104.6,722.4 1106.2,724.7 1107.8,726.2 1109.4,726.9 1111.0,726.9 1112.6,726.2 1114.2,725.4 1115.8,724.6 1117.4,722.9 1119.0,724.3 1120.6,724.7 1122.2,726.0 1123.8,727.7 1125.4,728.9 1127.0,729.8 1128.6,730.3 1130.1,730.7 1131.7,731.0 1133.3,731.2 1134.9,731.3 1136.5,731.4 1308.6,731.6 1304.8,735.1 922.3,735.1"/>
<polyline fill="none" stroke="#6d9021" stroke-width="1.8" stroke-dasharray="2.7 1.8" points="926.1,731.6 1076.0,731.4 1077.6,731.3 1079.1,731.2 1080.7,731.0 1082.3,730.7 1083.9,730.3 1085.5,729.7 1087.1,728.8 1088.7,727.5 1090.3,725.7 1091.9,723.0 1093.5,719.1 1095.1,713.4 1096.7,705.2 1098.3,693.2 1099.9,705.0 1101.5,713.1 1103.1,718.7 1104.6,722.4 1106.2,724.7 1107.8,726.2 1109.4,726.9 1111.0,726.9 1112.6,726.2 1114.2,725.4 1115.8,724.6 1117.4,722.9 1119.0,724.3 1120.6,724.7 1122.2,726.0 1123.8,727.7 1125.4,728.9 1127.0,729.8 1128.6,730.3 1130.1,730.7 1131.7,731.0 1133.3,731.2 1134.9,731.3 1136.5,731.4 1308.6,731.6"/>
<polygon fill="#000818" points="922.3,735.1 1073.7,734.9 1075.3,734.8 1076.9,734.6 1078.5,734.4 1080.1,734.0 1081.7,733.6 1083.3,732.9 1084.9,731.8 1086.5,730.4 1088.1,728.2 1089.7,725.1 1091.3,720.6 1092.9,714.1 1094.5,704.7 1096.0,714.0 1097.6,720.4 1099.2,724.8 1100.8,727.6 1102.4,729.5 1104.0,730.6 1105.6,731.1 1107.2,731.0 1108.8,730.3 1110.4,729.2 1112.0,727.5 1113.6,724.9 1115.2,725.1 1116.8,724.0 1118.4,725.6 1120.0,728.5 1121.5,730.6 1123.1,732.0 1124.7,733.0 1126.3,733.6 1127.9,734.1 1129.5,734.4 1131.1,734.6 1132.7,734.8 1134.3,734.9 1304.8,735.1 1301.0,738.6 918.5,738.6"/>
<polyline fill="none" stroke="#7a8d1e" stroke-width="1.8" stroke-dasharray="2.7 1.8" points="922.3,735.1 1073.7,734.9 1075.3,734.8 1076.9,734.6 1078.5,734.4 1080.1,734.0 1081.7,733.6 1083.3,732.9 1084.9,731.8 1086.5,730.4 1088.1,728.2 1089.7,725.1 1091.3,720.6 1092.9,714.1 1094.5,704.7 1096.0,714.0 1097.6,720.4 1099.2,724.8 1100.8,727.6 1102.4,729.5 1104.0,730.6 1105.6,731.1 1107.2,731.0 1108.8,730.3 1110.4,729.2 1112.0,727.5 1113.6,724.9 1115.2,725.1 1116.8,724.0 1118.4,725.6 1120.0,728.5 1121.5,730.6 1123.1,732.0 1124.7,733.0 1126.3,733.6 1127.9,734.1 1129.5,734.4 1131.1,734.6 1132.7,734.8 1134.3,734.9 1304.8,735.1"/>
<polygon fill="#000818" points="918.5,738.6 1071.5,738.4 1073.1,738.2 1074.7,738.1 1076.3,737.8 1077.9,737.5 1079.5,737.0 1081.1,736.2 1082.7,735.2 1084.3,733.7 1085.9,731.5 1087.4,728.3 1089.0,723.7 1090.6,717.0 1092.2,723.6 1093.8,728.0 1095.4,731.0 1097.0,733.0 1098.6,734.2 1100.2,734.8 1101.8,734.9 1103.4,734.5 1105.0,733.5 1106.6,731.9 1108.2,729.4 1109.8,725.7 1111.4,724.5 1112.9,721.4 1114.5,723.4 1116.1,728.1 1117.7,731.4 1119.3,733.6 1120.9,735.2 1122.5,736.3 1124.1,737.0 1125.7,737.5 1127.3,737.8 1128.9,738.1 1130.5,738.3 1132.1,738.4 1301.0,738.6 1297.2,742.1 914.7,742.1"/>
<polyline fill="none" stroke="#878a1c" stroke-width="1.8" stroke-dasharray="2.7 1.8" points="918.5,738.6 1071.5,738.4 1073.1,738.2 1074.7,738.1 1076.3,737.8 1077.9,737.5 1079.5,737.0 1081.1,736.2 1082.7,735.2 1084.3,733.7 1085.9,731.5 1087.4,728.3 1089.0,723.7 1090.6,717.0 1092.2,723.6 1093.8,728.0 1095.4,731.0 1097.0,733.0 1098.6,734.2 1100.2,734.8 1101.8,734.9 1103.4,734.5 1105.0,733.5 1106.6,731.9 1108.2,729.4 1109.8,725.7 1111.4,724.5 1112.9,721.4 1114.5,723.4 1116.1,728.1 1117.7,731.4 1119.3,733.6 1120.9,735.2 1122.5,736.3 1124.1,737.0 1125.7,737.5 1127.3,737.8 1128.9,738.1 1130.5,738.3 1132.1,738.4 1301.0,738.6"/>
<polygon fill="#000818" points="914.7,742.1 1069.3,741.8 1070.9,741.7 1072.5,741.5 1074.1,741.3 1075.7,741.0 1077.3,740.4 1078.8,739.7 1080.4,738.7 1082.0,737.2 1083.6,735.0 1085.2,732.0 1086.8,727.5 1088.4,731.8 1090.0,734.7 1091.6,736.7 1093.2,737.9 1094.8,738.6 1096.4,738.8 1098.0,738.5 1099.6,737.8 1101.2,736.5 1102.8,734.4 1104.3,731.3 1105.9,726.7 1107.5,724.3 1109.1,719.3 1110.7,721.7 1112.3,728.1 1113.9,732.5 1115.5,735.5 1117.1,737.6 1118.7,739.0 1120.3,740.0 1121.9,740.6 1123.5,741.1 1125.1,741.4 1126.7,741.6 1128.3,741.8 1129.8,741.9 1297.2,742.1 1293.4,745.6 910.9,745.6"/>
<polyline fill="none" stroke="#8d821b" stroke-width="1.8" stroke-dasharray="2.7 1.8" points="914.7,742.1 1069.3,741.8 1070.9,741.7 1072.5,741.5 1074.1,741.3 1075.7,741.0 1077.3,740.4 1078.8,739.7 1080.4,738.7 1082.0,737.2 1083.6,735.0 1085.2,732.0 1086.8,727.5 1088.4,731.8 1090.0,734.7 1091.6,736.7 1093.2,737.9 1094.8,738.6 1096.4,738.8 1098.0,738.5 1099.6,737.8 1101.2,736.5 1102.8,734.4 1104.3,731.3 1105.9,726.7 1107.5,724.3 1109.1,719.3 1110.7,721.7 1112.3,728.1 1113.9,732.5 1115.5,735.5 1117.1,737.6 1118.7,739.0 1120.3,740.0 1121.9,740.6 1123.5,741.1 1125.1,741.4 1126.7,741.6 1128.3,741.8 1129.8,741.9 1297.2,742.1"/>
<polygon fill="#000818" points="910.9,745.6 1071.8,745.4 1073.4,745.2 1075.0,745.1 1076.6,744.9 1078.2,744.5 1079.8,744.0 1081.4,743.3 1083.0,742.2 1084.6,743.1 1086.2,743.7 1087.8,744.0 1089.4,744.0 1091.0,743.9 1092.6,743.5 1094.2,742.8 1095.7,741.7 1097.3,740.1 1098.9,737.8 1100.5,734.4 1102.1,729.5 1103.7,726.7 1105.3,721.2 1106.9,723.6 1108.5,730.5 1110.1,735.2 1111.7,738.5 1113.3,740.7 1114.9,742.2 1116.5,743.3 1118.1,744.0 1119.7,744.5 1121.2,744.8 1122.8,745.1 1124.4,745.2 1126.0,745.4 1293.4,745.6 1289.5,749.1 907.0,749.1"/>
<polyline fill="none" stroke="#92791b" stroke-width="1.8" stroke-dasharray="2.7 1.8" points="910.9,745.6 1071.8,745.4 1073.4,745.2 1075.0,745.1 1076.6,744.9 1078.2,744.5 1079.8,744.0 1081.4,743.3 1083.0,742.2 1084.6,743.1 1086.2,743.7 1087.8,744.0 1089.4,744.0 1091.0,743.9 1092.6,743.5 1094.2,742.8 1095.7,741.7 1097.3,740.1 1098.9,737.8 1100.5,734.4 1102.1,729.5 1103.7,726.7 1105.3,721.2 1106.9,723.6 1108.5,730.5 1110.1,735.2 1111.7,738.5 1113.3,740.7 1114.9,742.2 1116.5,743.3 1118.1,744.0 1119.7,744.5 1121.2,744.8 1122.8,745.1 1124.4,745.2 1126.0,745.4 1293.4,745.6"/>
<polygon fill="#000818" points="907.1,749.1 1072.8,748.8 1074.4,748.7 1076.0,748.5 1077.6,748.2 1079.2,747.8 1080.8,748.1 1082.4,748.2 1084.0,748.2 1085.6,748.1 1087.1,747.8 1088.7,747.3 1090.3,746.7 1091.9,745.7 1093.5,744.2 1095.1,742.1 1096.7,739.0 1098.3,734.6 1099.9,732.4 1101.5,728.0 1103.1,730.2 1104.7,736.1 1106.3,740.2 1107.9,742.9 1109.5,744.9 1111.1,746.2 1112.6,747.1 1114.2,747.7 1115.8,748.1 1117.4,748.4 1119.0,748.6 1120.6,748.8 1122.2,748.9 1289.6,748.9 1285.7,752.6 903.2,752.6"/>
<polyline fill="none" stroke="#96701b" stroke-width="1.8" stroke-dasharray="2.7 1.8" points="907.1,749.1 1072.8,748.8 1074.4,748.7 1076.0,748.5 1077.6,748.2 1079.2,747.8 1080.8,748.1 1082.4,748.2 1084.0,748.2 1085.6,748.1 1087.1,747.8 1088.7,747.3 1090.3,746.7 1091.9,745.7 1093.5,744.2 1095.1,742.1 1096.7,739.0 1098.3,734.6 1099.9,732.4 1101.5,728.0 1103.1,730.2 1104.7,736.1 1106.3,740.2 1107.9,742.9 1109.5,744.9 1111.1,746.2 1112.6,747.1 1114.2,747.7 1115.8,748.1 1117.4,748.4 1119.0,748.6 1120.6,748.8 1122.2,748.9 1289.6,748.9"/>
<polygon fill="#000818" points="903.2,752.6 1072.2,752.3 1073.8,752.2 1075.4,752.1 1077.0,752.1 1078.5,752.1 1080.1,752.0 1081.7,751.9 1083.3,751.6 1084.9,751.2 1086.5,750.7 1088.1,749.8 1089.7,748.7 1091.3,747.0 1092.9,744.5 1094.5,741.0 1096.1,740.2 1097.7,737.7 1099.3,739.4 1100.9,743.5 1102.5,746.3 1104.0,748.3 1105.6,749.6 1107.2,750.5 1108.8,751.2 1110.4,751.6 1112.0,751.9 1113.6,752.1 1115.2,752.3 1116.8,752.4 1277.8,752.3 1279.4,752.1 1281.0,751.8 1282.5,751.2 1284.1,750.7 1285.7,751.5 1281.9,756.1 899.4,756.1"/>
<polyline fill="none" stroke="#9b671b" stroke-width="1.8" stroke-dasharray="2.7 1.8" points="903.2,752.6 1072.2,752.3 1073.8,752.2 1075.4,752.1 1077.0,752.1 1078.5,752.1 1080.1,752.0 1081.7,751.9 1083.3,751.6 1084.9,751.2 1086.5,750.7 1088.1,749.8 1089.7,748.7 1091.3,747.0 1092.9,744.5 1094.5,741.0 1096.1,740.2 1097.7,737.7 1099.3,739.4 1100.9,743.5 1102.5,746.3 1104.0,748.3 1105.6,749.6 1107.2,750.5 1108.8,751.2 1110.4,751.6 1112.0,751.9 1113.6,752.1 1115.2,752.3 1116.8,752.4 1277.8,752.3 1279.4,752.1 1281.0,751.8 1282.5,751.2 1284.1,750.7 1285.7,751.5"/>
<polygon fill="#000818" points="899.4,756.1 1074.7,755.8 1076.3,755.7 1077.9,755.5 1079.5,755.3 1081.1,755.0 1082.7,754.6 1084.3,753.9 1085.9,753.0 1087.5,751.7 1089.1,749.9 1090.7,747.2 1092.3,747.6 1093.9,747.0 1095.4,748.3 1097.0,750.7 1098.6,752.4 1100.2,753.5 1101.8,754.3 1103.4,754.8 1105.0,755.2 1106.6,755.5 1108.2,755.7 1109.8,755.8 1269.2,755.8 1270.8,755.7 1272.4,755.5 1273.9,755.0 1275.5,754.3 1277.1,753.2 1278.7,751.2 1280.3,749.4 1281.9,752.1 1278.1,759.6 895.6,759.6"/>
<polyline fill="none" stroke="#9f5e1b" stroke-width="1.8" stroke-dasharray="2.7 1.8" points="899.4,756.1 1074.7,755.8 1076.3,755.7 1077.9,755.5 1079.5,755.3 1081.1,755.0 1082.7,754.6 1084.3,753.9 1085.9,753.0 1087.5,751.7 1089.1,749.9 1090.7,747.2 1092.3,747.6 1093.9,747.0 1095.4,748.3 1097.0,750.7 1098.6,752.4 1100.2,753.5 1101.8,754.3 1103.4,754.8 1105.0,755.2 1106.6,755.5 1108.2,755.7 1109.8,755.8 1269.2,755.8 1270.8,755.7 1272.4,755.5 1273.9,755.0 1275.5,754.3 1277.1,753.2 1278.7,751.2 1280.3,749.4 1281.9,752.1"/>
<polygon fill="#000818" points="895.6,759.6 1070.9,759.3 1072.5,759.2 1074.1,759.1 1075.7,758.9 1077.3,758.7 1078.9,758.3 1080.5,757.8 1082.1,757.1 1083.7,756.0 1085.3,754.5 1086.8,752.4 1088.4,753.7 1090.0,754.1 1091.6,755.2 1093.2,756.5 1094.8,757.4 1096.4,758.1 1098.0,758.5 1099.6,758.8 1101.2,759.1 1102.8,759.2 1104.4,759.3 1263.8,759.3 1265.3,759.1 1266.9,758.8 1268.5,758.3 1270.1,757.5 1271.7,756.0 1273.3,753.6 1274.9,749.5 1276.5,745.8 1278.1,751.4 1274.3,763.1 891.8,763.1"/>
<polyline fill="none" stroke="#a4551b" stroke-width="1.8" stroke-dasharray="2.7 1.8" points="895.6,759.6 1070.9,759.3 1072.5,759.2 1074.1,759.1 1075.7,758.9 1077.3,758.7 1078.9,758.3 1080.5,757.8 1082.1,757.1 1083.7,756.0 1085.3,754.5 1086.8,752.4 1088.4,753.7 1090.0,754.1 1091.6,755.2 1093.2,756.5 1094.8,757.4 1096.4,758.1 1098.0,758.5 1099.6,758.8 1101.2,759.1 1102.8,759.2 1104.4,759.3 1263.8,759.3 1265.3,759.1 1266.9,758.8 1268.5,758.3 1270.1,757.5 1271.7,756.0 1273.3,753.6 1274.9,749.5 1276.5,745.8 1278.1,751.4"/>
<polygon fill="#000818" points="891.8,763.0 1081.4,762.8 1083.0,762.7 1084.6,762.5 1086.2,762.3 1087.8,762.3 1089.4,762.6 1091.0,762.7 1092.6,762.8 1258.3,762.9 1259.9,762.7 1261.5,762.5 1263.1,762.2 1264.7,761.6 1266.3,760.6 1267.9,758.9 1269.5,756.1 1271.1,751.4 1272.7,747.1 1274.3,753.6 1270.4,766.5 887.9,766.5"/>
<polyline fill="none" stroke="#a74c1c" stroke-width="1.8" stroke-dasharray="2.7 1.8" points="891.8,763.0 1081.4,762.8 1083.0,762.7 1084.6,762.5 1086.2,762.3 1087.8,762.3 1089.4,762.6 1091.0,762.7 1092.6,762.8 1258.3,762.9 1259.9,762.7 1261.5,762.5 1263.1,762.2 1264.7,761.6 1266.3,760.6 1267.9,758.9 1269.5,756.1 1271.1,751.4 1272.7,747.1 1274.3,753.6"/>
<polygon fill="#000818" points="888.0,766.5 1256.1,766.3 1257.7,766.2 1259.3,766.0 1260.9,765.6 1262.5,764.9 1264.1,763.8 1265.7,761.9 1267.3,758.8 1268.9,756.0 1270.5,760.3 1266.6,770.0 884.1,770.0"/>
<polyline fill="none" stroke="#a9421e" stroke-width="1.8" stroke-dasharray="2.7 1.8" points="888.0,766.5 1256.1,766.3 1257.7,766.2 1259.3,766.0 1260.9,765.6 1262.5,764.9 1264.1,763.8 1265.7,761.9 1267.3,758.8 1268.9,756.0 1270.5,760.3"/>
<polygon fill="#000818" points="884.1,770.0 1255.5,769.8 1257.1,769.7 1258.7,769.4 1260.3,769.0 1261.9,768.3 1263.5,767.1 1265.0,766.0 1266.6,767.7 1262.8,773.5 880.3,773.5"/>
<polyline fill="none" stroke="#ab3920" stroke-width="1.8" stroke-dasharray="2.7 1.8" points="884.1,770.0 1255.5,769.8 1257.1,769.7 1258.7,769.4 1260.3,769.0 1261.9,768.3 1263.5,767.1 1265.0,766.0 1266.6,767.7"/>
<polygon fill="#000818" points="880.3,773.5 1256.4,773.3 1258.0,773.1 1259.6,772.9 1261.2,772.7 1262.8,773.0 1259.0,777.0 876.5,777.0"/>
<polyline fill="none" stroke="#ae3022" stroke-width="1.8" stroke-dasharray="2.7 1.8" points="880.3,773.5 1256.4,773.3 1258.0,773.1 1259.6,772.9 1261.2,772.7 1262.8,773.0"/>
<polygon fill="#000818" points="876.5,777.0 1259.0,776.9 1257.9,778.0 875.4,778.0"/>
<polyline fill="none" stroke="#b02624" stroke-width="1.8" stroke-dasharray="2.7 1.8" points="876.5,777.0 1259.0,776.9"/>
<line x1="876" y1="815" x2="1254" y2="815" stroke="#2a3a58" stroke-width="1.2" stroke-dasharray="1.5 3"/>
<rect x="1068.3" y="810" width="2" height="5" fill="#2050a0"/><rect x="1074" y="783" width="2" height="32" fill="#2050a0"/><rect x="1078.5" y="802" width="2" height="13" fill="#2050a0"/>
<line x1="874" y1="838.2" x2="1253" y2="838.2" stroke="#1e4c90" stroke-width="1.6"/>
<line x1="871" y1="862.8" x2="917.5" y2="862.8" stroke="#1a50e8" stroke-width="2.6" stroke-dasharray="7 1.5"/>
</svg><!--/PLOT-->

<!-- speaker -->
<svg class="a" style="left:1415px;top:668px" width="90" height="86" viewBox="1415 668 90 86">
<defs>
<linearGradient id="cone" x1="0.2" y1="0" x2="0.6" y2="1"><stop offset="0" stop-color="#c06a1c"/><stop offset="0.45" stop-color="#e8902c"/><stop offset="0.8" stop-color="#f8c040"/><stop offset="1" stop-color="#f0a030"/></linearGradient>
<radialGradient id="dome" cx="0.4" cy="0.3" r="0.75"><stop offset="0" stop-color="#b0b0b0"/><stop offset="0.3" stop-color="#606060"/><stop offset="1" stop-color="#080808"/></radialGradient>
<linearGradient id="ring" x1="0" y1="0" x2="0.3" y2="1"><stop offset="0" stop-color="#9a9a9a"/><stop offset="0.35" stop-color="#d8d8d8"/><stop offset="0.7" stop-color="#9a9a9a"/><stop offset="1" stop-color="#e8e8e8"/></linearGradient>
</defs>
<ellipse cx="1466" cy="718" rx="31" ry="31" fill="#1c1c1c"/>
<circle cx="1459" cy="711" r="35.5" fill="url(#ring)"/>
<circle cx="1459" cy="711" r="32.3" fill="#2c2c2c"/>
<circle cx="1459" cy="711" r="28.5" fill="none" stroke="#161616" stroke-width="1"/>
<circle cx="1459" cy="711" r="26.4" fill="url(#cone)"/>
<path d="M1439 729 Q1446 725 1452 719" stroke="#fff4d0" stroke-width="3.5" opacity="0.6" fill="none" stroke-linecap="round"/><path d="M1480 699 L1472 705" stroke="#ffe0b0" stroke-width="2" opacity="0.5" fill="none" stroke-linecap="round"/>
<circle cx="1460.2" cy="711" r="11.5" fill="url(#dome)" stroke="#000" stroke-width="0.8"/>
</svg>
<!-- xylophone -->
<svg class="a" style="left:1320px;top:775px" width="195" height="90" viewBox="1320 775 195 90">
<polygon points="1329.3,819.6 1489.2,812.2 1489.2,823.3 1486.1,826.1 1329.3,826.1" fill="#e6d2a6"/>
<polygon points="1491.7,793.6 1502.2,791.1 1506.5,791.7 1506.5,802.9 1491.7,806.0" fill="#e6d2a6"/>
<polygon points="1326.2,819.9 1344.2,819.9 1344.2,818.4 1326.2,818.4" fill="#b03080"/>
<polygon points="1354.7,787.4 1368.3,787.4 1344.2,818.4 1326.2,818.4" fill="#f050b0"/>
<polygon points="1344.2,821.7 1362.8,821.7 1362.8,820.2 1344.2,820.2" fill="#b02818"/>
<polygon points="1374.5,784.3 1390.0,784.3 1362.8,820.2 1344.2,820.2" fill="#f43c22"/>
<polygon points="1363.4,823.6 1382.6,823.6 1382.6,822.1 1363.4,822.1" fill="#b05a08"/>
<polygon points="1393.7,784.3 1409.2,784.3 1382.6,822.1 1363.4,822.1" fill="#fa8410"/>
<polygon points="1382.6,823.6 1401.8,823.6 1401.8,822.1 1382.6,822.1" fill="#b0a010"/>
<polygon points="1413.0,784.3 1429.1,784.3 1401.8,822.1 1382.6,822.1" fill="#fae22a"/>
<polygon points="1401.8,823.6 1420.4,823.6 1420.4,822.1 1401.8,822.1" fill="#0a7018"/>
<polygon points="1432.2,784.3 1447.7,784.3 1420.4,822.1 1401.8,822.1" fill="#12a82a"/>
<polygon points="1421.0,823.6 1439.6,823.6 1439.6,822.1 1421.0,822.1" fill="#1060b0"/>
<polygon points="1451.4,784.3 1466.9,784.3 1439.6,822.1 1421.0,822.1" fill="#1894f4"/>
<polygon points="1440.8,823.6 1458.8,823.6 1458.8,822.1 1440.8,822.1" fill="#3a0a98"/>
<polygon points="1470.6,784.3 1486.7,784.3 1458.8,822.1 1440.8,822.1" fill="#5a18d8"/>
<polygon points="1463.8,819.9 1479.9,819.9 1479.9,818.4 1463.8,818.4" fill="#5a1090"/>
<polygon points="1486.7,787.4 1504.7,787.4 1479.9,818.4 1463.8,818.4" fill="#8a22d0"/>
<circle cx="1355.9" cy="791.7" r="2.1" fill="#8a8a8a"/><circle cx="1338.6" cy="811.6" r="2.1" fill="#8a8a8a"/>
<circle cx="1375.2" cy="790.5" r="2.1" fill="#8a8a8a"/><circle cx="1357.2" cy="811.6" r="2.1" fill="#8a8a8a"/>
<circle cx="1394.4" cy="791.1" r="2.1" fill="#8a8a8a"/><circle cx="1376.4" cy="811.6" r="2.1" fill="#8a8a8a"/>
<circle cx="1413.6" cy="791.1" r="2.1" fill="#8a8a8a"/><circle cx="1395.6" cy="811.6" r="2.1" fill="#8a8a8a"/>
<circle cx="1432.8" cy="791.1" r="2.1" fill="#8a8a8a"/><circle cx="1414.8" cy="811.6" r="2.1" fill="#8a8a8a"/>
<circle cx="1453.2" cy="791.1" r="2.1" fill="#8a8a8a"/><circle cx="1435.3" cy="811.6" r="2.1" fill="#8a8a8a"/>
<circle cx="1471.8" cy="791.7" r="2.1" fill="#8a8a8a"/><circle cx="1453.2" cy="812.2" r="2.1" fill="#8a8a8a"/>
<circle cx="1492.9" cy="792.4" r="2.1" fill="#8a8a8a"/><circle cx="1474.9" cy="812.8" r="2.1" fill="#8a8a8a"/>
<line x1="1357.2" y1="834.5" x2="1455.7" y2="854.3" stroke="#e8d0a0" stroke-width="2.6" stroke-linecap="round"/>
<circle cx="1350.4" cy="831.4" r="11.8" fill="#cc2010"/>
</svg>

<!-- bottom right panels -->
<div class="a" style="left:700px;top:884.5px;width:811px;height:1px;background:#26261e"></div>
<div class="a" style="left:700px;top:984px;width:811px;height:1px;background:#26261e"></div>
<div class="a" style="left:897px;top:885px;width:3px;height:99px;background:#2e2e2a"></div>
<div class="a lbl2" style="left:727px;top:896.5px">Tone Information</div>
<div class="a lbl2" style="left:924px;top:896.5px">Volume Unit Meter</div>
<svg class="a" style="left:720px;top:905px" width="160" height="80" viewBox="720 905 160 80">
<rect x="728.5" y="914.5" width="136.5" height="63" fill="none" stroke="#1c2c0c" stroke-width="1.3"/>
<line x1="765" y1="914.5" x2="765" y2="977.5" stroke="#1c2c0c" stroke-width="1.3"/>
<line x1="829.4" y1="914.5" x2="829.4" y2="977.5" stroke="#1c2c0c" stroke-width="1.3"/>
<g font-family="Liberation Sans" font-size="10" fill="#0c2010" text-anchor="middle">
<text x="746.7" y="951">Flat</text><text x="797" y="951">Just Right</text><text x="847.5" y="951">Sharp</text></g>
</svg>
<div class="a val" style="left:931.5px;top:930.5px;transform:scaleX(1.0);transform-origin:0 0">-43.6859</div>
<!-- VU gauge -->
<svg class="a" style="left:1030px;top:895px" width="190" height="90" viewBox="1030 895 190 90">
<defs><linearGradient id="vug" x1="1058" y1="0" x2="1196" y2="0" gradientUnits="userSpaceOnUse">
<stop offset="0" stop-color="#10d010"/><stop offset="0.22" stop-color="#60e010"/><stop offset="0.5" stop-color="#ffff00"/><stop offset="0.7" stop-color="#ffa000"/><stop offset="0.85" stop-color="#ff3000"/><stop offset="1" stop-color="#ff1a00"/></linearGradient></defs>
<path d="M1060.5 945.5 A109.7 109.7 0 0 1 1193.3 946.1" fill="none" stroke="url(#vug)" stroke-width="9.8"/>
<defs><linearGradient id="lowarc" x1="1082" y1="0" x2="1174" y2="0" gradientUnits="userSpaceOnUse"><stop offset="0" stop-color="#3a4a60"/><stop offset="0.6" stop-color="#1a2230"/><stop offset="1" stop-color="#000"/></linearGradient></defs><path d="M1081.2 973.7 A74.0 74.0 0 0 1 1172.3 972.9" fill="none" stroke="url(#lowarc)" stroke-width="1.8"/>
<polygon points="1063.3,947.2 1086.1,968.7 1081.5,972.5" fill="#0a40f0"/>
<g font-family="Liberation Sans" font-size="9.5" fill="#d0d0d0" text-anchor="middle"><text x="1050.9" y="937.6">-42</text><text x="1087.4" y="919.4">-30</text><text x="1121.3" y="915.5">-20</text><text x="1155.2" y="916.8">-10</text><text x="1185.3" y="928.5">0</text><text x="1202.2" y="939.6">6</text></g>
</svg>
<svg class="a" style="left:1215px;top:885px" width="298" height="100" viewBox="1215 885 298 100">
<rect x="1238.5" y="894.7" width="269" height="83" fill="#000"/>
<g font-family="Liberation Sans" font-size="8" fill="#b8b8b8" text-anchor="end"><text x="1233" y="980.0">0</text><line x1="1234" y1="977.0" x2="1237" y2="977.0" stroke="#b8b8b8" stroke-width="0.8"/><text x="1233" y="966.5">2</text><line x1="1234" y1="963.5" x2="1237" y2="963.5" stroke="#b8b8b8" stroke-width="0.8"/><text x="1233" y="953.0">4</text><line x1="1234" y1="950.0" x2="1237" y2="950.0" stroke="#b8b8b8" stroke-width="0.8"/><text x="1233" y="939.5">6</text><line x1="1234" y1="936.5" x2="1237" y2="936.5" stroke="#b8b8b8" stroke-width="0.8"/><text x="1233" y="926.0">8</text><line x1="1234" y1="923.0" x2="1237" y2="923.0" stroke="#b8b8b8" stroke-width="0.8"/><text x="1233" y="912.5">10</text><line x1="1234" y1="909.5" x2="1237" y2="909.5" stroke="#b8b8b8" stroke-width="0.8"/><text x="1233" y="899.0">12</text><line x1="1234" y1="896.0" x2="1237" y2="896.0" stroke="#b8b8b8" stroke-width="0.8"/></g>
<line x1="1239" y1="956.7" x2="1507" y2="956.7" stroke="#b05a30" stroke-width="1.3" stroke-dasharray="19 1.5"/>
<line x1="1239" y1="975.6" x2="1507" y2="975.6" stroke="#d8b000" stroke-width="2.6" stroke-dasharray="2.2 0.8"/>
<line x1="1263.0" y1="914.9" x2="1263.0" y2="977" stroke="#c89020" stroke-width="1.2"/><circle cx="1263.0" cy="914.9" r="1.8" fill="#f0c000"/><line x1="1265.0" y1="944.6" x2="1265.0" y2="977" stroke="#30a010" stroke-width="2"/><circle cx="1265.0" cy="944.6" r="1.8" fill="#e8c000"/><path d="M1265.0 970 Q1268.0 974 1281.0 975.5" stroke="#d8b000" stroke-width="2.2" fill="none" stroke-dasharray="2 0.8"/><line x1="1289.0" y1="924.4" x2="1289.0" y2="977" stroke="#c89020" stroke-width="1.2"/><circle cx="1289.0" cy="924.4" r="1.8" fill="#f0c000"/><line x1="1291.0" y1="970.2" x2="1291.0" y2="977" stroke="#30a010" stroke-width="2"/><circle cx="1291.0" cy="970.2" r="1.8" fill="#e8c000"/><path d="M1291.0 970 Q1294.0 974 1307.0 975.5" stroke="#d8b000" stroke-width="2.2" fill="none" stroke-dasharray="2 0.8"/><line x1="1312.5" y1="921.6" x2="1312.5" y2="977" stroke="#c89020" stroke-width="1.2"/><circle cx="1312.5" cy="921.6" r="1.8" fill="#f0c000"/><line x1="1314.5" y1="944.6" x2="1314.5" y2="977" stroke="#30a010" stroke-width="2"/><circle cx="1314.5" cy="944.6" r="1.8" fill="#e8c000"/><path d="M1314.5 970 Q1317.5 974 1330.5 975.5" stroke="#d8b000" stroke-width="2.2" fill="none" stroke-dasharray="2 0.8"/><line x1="1339.5" y1="939.9" x2="1339.5" y2="977" stroke="#c89020" stroke-width="1.2"/><circle cx="1339.5" cy="939.9" r="1.8" fill="#f0c000"/><line x1="1341.5" y1="971.6" x2="1341.5" y2="977" stroke="#30a010" stroke-width="2"/><circle cx="1341.5" cy="971.6" r="1.8" fill="#e8c000"/><path d="M1341.5 970 Q1344.5 974 1357.5 975.5" stroke="#d8b000" stroke-width="2.2" fill="none" stroke-dasharray="2 0.8"/><line x1="1363.3" y1="916.9" x2="1363.3" y2="977" stroke="#c89020" stroke-width="1.2"/><circle cx="1363.3" cy="916.9" r="1.8" fill="#f0c000"/><line x1="1365.3" y1="949.3" x2="1365.3" y2="977" stroke="#30a010" stroke-width="2"/><circle cx="1365.3" cy="949.3" r="1.8" fill="#e8c000"/><path d="M1365.3 970 Q1368.3 974 1381.3 975.5" stroke="#d8b000" stroke-width="2.2" fill="none" stroke-dasharray="2 0.8"/><line x1="1401.5" y1="925.0" x2="1401.5" y2="977" stroke="#c89020" stroke-width="1.2"/><circle cx="1401.5" cy="925.0" r="1.8" fill="#f0c000"/><line x1="1403.5" y1="968.9" x2="1403.5" y2="977" stroke="#30a010" stroke-width="2"/><circle cx="1403.5" cy="968.9" r="1.8" fill="#e8c000"/><path d="M1403.5 970 Q1406.5 974 1419.5 975.5" stroke="#d8b000" stroke-width="2.2" fill="none" stroke-dasharray="2 0.8"/><line x1="1413.6" y1="907.5" x2="1413.6" y2="977" stroke="#c89020" stroke-width="1.2"/><circle cx="1413.6" cy="907.5" r="1.8" fill="#f0c000"/><line x1="1415.6" y1="960.8" x2="1415.6" y2="977" stroke="#30a010" stroke-width="2"/><circle cx="1415.6" cy="960.8" r="1.8" fill="#e8c000"/><path d="M1415.6 970 Q1418.6 974 1431.6 975.5" stroke="#d8b000" stroke-width="2.2" fill="none" stroke-dasharray="2 0.8"/><line x1="1463.5" y1="941.9" x2="1463.5" y2="977" stroke="#c89020" stroke-width="1.2"/><circle cx="1463.5" cy="941.9" r="1.8" fill="#f0c000"/><line x1="1465.5" y1="970.9" x2="1465.5" y2="977" stroke="#30a010" stroke-width="2"/><circle cx="1465.5" cy="970.9" r="1.8" fill="#e8c000"/><path d="M1465.5 970 Q1468.5 974 1481.5 975.5" stroke="#d8b000" stroke-width="2.2" fill="none" stroke-dasharray="2 0.8"/>
</svg>
<div class="a" style="left:1438.5px;top:987.5px;width:71px;height:97.5px;background:#222"></div>
<svg class="a" style="left:1455px;top:990px" width="36" height="85" viewBox="1455 990 36 85">
<defs><linearGradient id="pl" x1="0" y1="0" x2="1" y2="0"><stop offset="0" stop-color="#c8c8d0"/><stop offset="0.5" stop-color="#ffffff"/><stop offset="1" stop-color="#a8a8b0"/></linearGradient></defs>
<rect x="1468.5" y="992.8" width="8" height="26.5" rx="1.5" fill="url(#pl)"/>
<circle cx="1472.3" cy="996.5" r="1.3" fill="#111"/>
<line x1="1468" y1="1004" x2="1477" y2="1004" stroke="#333" stroke-width="0.6"/>
<rect x="1462.3" y="1019" width="20.4" height="41" fill="#6aa0d2"/>
<rect x="1468.5" y="1019.5" width="8" height="2" fill="#c8a870"/>
<rect x="1462.3" y="1058.5" width="20.4" height="2" fill="#c8a870"/>
<rect x="1468.5" y="1062" width="8" height="9" rx="3" fill="#e8e8e8"/>
</svg>

<!-- thumbnail 3d -->
<svg class="a" style="left:662px;top:377px" width="89" height="35" viewBox="662 377 89 35">
<defs><linearGradient id="pk" x1="0" y1="1" x2="0" y2="0"><stop offset="0" stop-color="#00b0ff"/><stop offset="0.35" stop-color="#00e060"/><stop offset="0.65" stop-color="#e8e000"/><stop offset="1" stop-color="#ff4000"/></linearGradient></defs>
<rect x="662" y="377" width="89" height="34.5" fill="#000"/>
<g stroke="#262626" stroke-width="0.6" fill="none"><path d="M663 387 L693 381 L745 385"/><path d="M663 395 L693 389"/><path d="M680 405 L700 380"/></g>
<polygon points="665,403 693,392 745,397 718,409.5" fill="#1a3cf0"/>
<polygon points="672,401 695,394 735,396 715,404" fill="#2050ff"/>
<polygon points="702,393 704,385 706,393" fill="#20d0e0"/>
<polygon points="707,396 710,388 712,383 714,389 716,380 718,386 720,383 722,389 723,386 726,396 716,399" fill="url(#pk)"/>
<polygon points="726,396 728,390 730,396" fill="#30e080"/>
<path d="M731 379 H727 V391 H744 V387" fill="none" stroke="#3a6aa8" stroke-width="1.2"/>
<path d="M736 384 L744 377.5 M740 377.5 H744 V381" fill="none" stroke="#3a6aa8" stroke-width="1.2"/>
</svg>
<!-- NISQUARE logo -->
<svg class="a" style="left:1420px;top:377px" width="80" height="35" viewBox="1420 377 80 35">
<path d="M1444 377.5 Q1446 377 1450 377.2 L1470 383 Q1473 384 1472.5 386.5 L1443 386.5 Z" fill="#0a6ad8"/>
<path d="M1438 403 Q1437 400 1440 400 L1469 400 L1466 409 Q1465 411 1461 410.5 L1441 405 Z" fill="#0a6ad8"/>
<text x="1427.5" y="396.5" font-family="Liberation Sans" font-size="9.5" font-weight="bold" font-style="italic" fill="#f0f0f0" textLength="54" lengthAdjust="spacingAndGlyphs">NISQUARE</text>
<rect x="1486" y="387" width="5" height="4" fill="none" stroke="#888" stroke-width="0.8"/>
<rect x="1488" y="385" width="5" height="4" fill="none" stroke="#888" stroke-width="0.8"/>
</svg>
<div class="a" style="left:1501px;top:671px;width:8px;height:1.5px;background:#5a6478"></div>
</body></html>
